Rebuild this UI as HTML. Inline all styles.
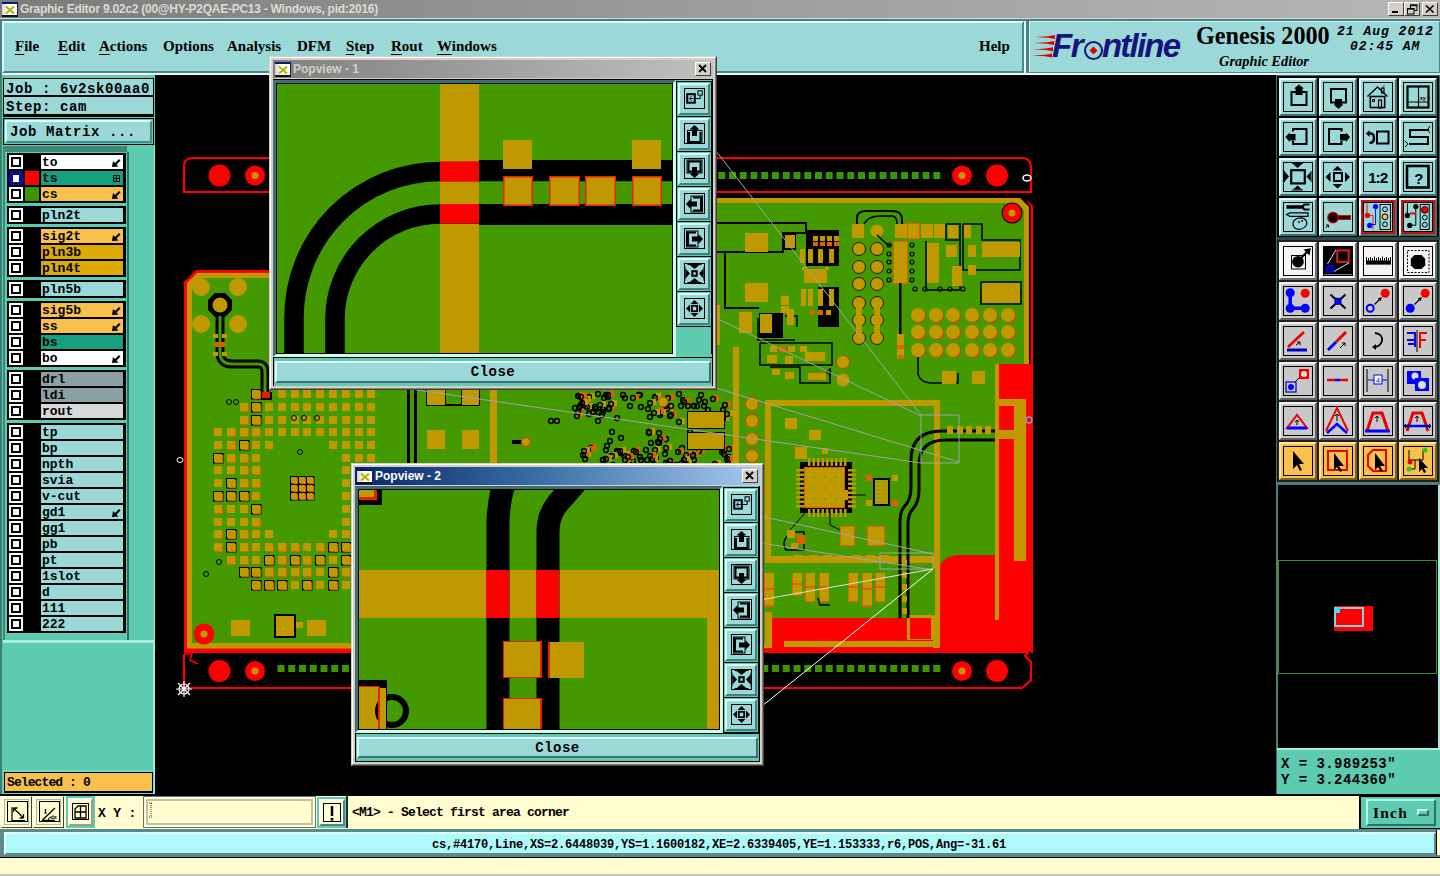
<!DOCTYPE html>
<html><head><meta charset="utf-8"><style>*{box-sizing:border-box;margin:0;padding:0}
html,body{width:1440px;height:876px;overflow:hidden;background:#fffcd0;position:relative;font-family:"Liberation Sans",sans-serif}
.a{position:absolute}
.mono{font-family:"Liberation Mono",monospace;font-weight:bold;color:#000}
.serif{font-family:"Liberation Serif",serif;font-weight:bold}
.mi{position:absolute;font-family:"Liberation Serif",serif;font-weight:bold;font-size:15px;color:#000;white-space:nowrap;line-height:16px}
.mi u{text-decoration:underline;text-underline-offset:3px;text-decoration-thickness:1px}
svg{display:block}
</style></head><body>
<div class="a" style="left:0;top:0;width:1440px;height:18px;background:linear-gradient(90deg,#7b7b7b 0%,#9a9a9a 45%,#b6b6b6 100%)"></div>
<div class="a" style="left:2px;top:2px;width:16px;height:15px;background:linear-gradient(90deg,#d8d8d8,#fff 40%);border-bottom:2px solid #111;border-right:1px solid #222"></div>
<div class="a" style="left:2px;top:2px;width:16px;height:2px;background:#0a1a70;"></div>
<svg class="a" style="left:4px;top:5px" width="12" height="10"><path d="M2 1.5 L10 8.5 M10 1.5 L2 8.5" stroke="#b0b800" stroke-width="2.2"/></svg>
<div class="a " style="left:20px;top:2px;font-size:12px;font-weight:bold;color:#dedad2;white-space:nowrap;letter-spacing:-0.25px">Graphic Editor 9.02c2 (00@HY-P2QAE-PC13 - Windows, pid:2016)</div>
<div class="a" style="left:1388px;top:2px;width:16px;height:14px;background:#d4d0c8;border-style:solid;border-width:1px;border-color:#fff #404040 #404040 #fff;"></div>
<div class="a" style="left:1404px;top:2px;width:16px;height:14px;background:#d4d0c8;border-style:solid;border-width:1px;border-color:#fff #404040 #404040 #fff;"></div>
<div class="a" style="left:1422px;top:2px;width:16px;height:14px;background:#d4d0c8;border-style:solid;border-width:1px;border-color:#fff #404040 #404040 #fff;"></div>
<svg class="a" style="left:1388px;top:2px" width="50" height="14"><rect x="4" y="9" width="6" height="2" fill="#000"/><path d="M22.5 6 V3.2 H29 V8.5 H26.5" fill="none" stroke="#000" stroke-width="1"/><rect x="22" y="2.5" width="7.5" height="1.6" fill="#000"/><rect x="19.5" y="6.5" width="6.5" height="5.5" fill="none" stroke="#000" stroke-width="1"/><rect x="19" y="6" width="7.5" height="1.6" fill="#000"/><path d="M38 3.5 L45.5 10.5 M45.5 3.5 L38 10.5" stroke="#000" stroke-width="1.7"/></svg>
<div class="a" style="left:0px;top:18px;width:1440px;height:1px;background:#cfdcdc;"></div>
<div class="a" style="left:0px;top:19px;width:1026px;height:2px;background:#4f8080;"></div>
<div class="a" style="left:0px;top:19px;width:2px;height:54px;background:#4f8080;"></div>
<div class="a" style="left:2px;top:21px;width:1022px;height:52px;background:#9bd9d9;border-style:solid;border-width:2px;border-color:#d8ffff #4f8585 #4f8585 #d8ffff;"></div>
<div class="a" style="left:1024px;top:21px;width:2px;height:52px;background:#d8ffff;"></div>
<div class="a mi" style="left:15px;top:38px;"><u>F</u>ile</div>
<div class="a mi" style="left:58px;top:38px;"><u>E</u>dit</div>
<div class="a mi" style="left:99px;top:38px;"><u>A</u>ctions</div>
<div class="a mi" style="left:163px;top:38px;">Options</div>
<div class="a mi" style="left:227px;top:38px;">Analysis</div>
<div class="a mi" style="left:297px;top:38px;">DFM</div>
<div class="a mi" style="left:346px;top:38px;"><u>S</u>tep</div>
<div class="a mi" style="left:391px;top:38px;"><u>R</u>out</div>
<div class="a mi" style="left:437px;top:38px;"><u>W</u>indows</div>
<div class="a mi" style="left:979px;top:38px;">Help</div>
<div class="a" style="left:1026px;top:19px;width:414px;height:2px;background:#4f8080;"></div>
<div class="a" style="left:1026px;top:19px;width:3px;height:54px;background:#4f8080;"></div>
<div class="a" style="left:1029px;top:21px;width:411px;height:52px;background:#9bd9d9;border-style:solid;border-width:1px;border-color:#c8f4f4 #4f8585 #4f8585 #c8f4f4;"></div>
<svg class="a" style="left:1030px;top:28px" width="165" height="36"><g fill="#e00000"><path d="M5 9 L18 8.2 L25 7 V11 L18 9.8 Z"/><path d="M4 15 L17 14.2 L24 13 V17 L17 15.8 Z"/><path d="M3 21.3 L16 20.5 L23 19.3 V23.3 L16 22.1 Z"/><path d="M2 27.5 L15 26.7 L22 25.5 V29.5 L15 28.3 Z"/></g></svg>
<div class="a " style="left:1052px;top:27px;font-family:'Liberation Sans',sans-serif;font-weight:bold;font-style:italic;font-size:33px;color:#14147a;letter-spacing:-1.5px;white-space:nowrap">Fr</div>
<div class="a " style="left:1102px;top:27px;font-family:'Liberation Sans',sans-serif;font-weight:bold;font-style:italic;font-size:33px;color:#14147a;letter-spacing:-1.8px;white-space:nowrap">ntline</div>
<svg class="a" style="left:1083px;top:40px" width="22" height="22"><circle cx="10.5" cy="10.5" r="8.5" fill="none" stroke="#14147a" stroke-width="2"/><path d="M10.5 6.5 L14.5 10.5 L10.5 14.5 L6.5 10.5 Z" fill="#e00000"/></svg>
<div class="a " style="left:1196px;top:22px;font-family:'Liberation Serif',serif;font-weight:bold;font-size:24.2px;color:#000;white-space:nowrap;letter-spacing:0px">Genesis 2000</div>
<div class="a " style="left:1337px;top:24px;font-family:'Liberation Mono',monospace;font-style:italic;font-weight:bold;font-size:13px;color:#000;white-space:nowrap;letter-spacing:1px">21 Aug 2012</div>
<div class="a " style="left:1350px;top:39px;font-family:'Liberation Mono',monospace;font-style:italic;font-weight:bold;font-size:13px;color:#000;white-space:nowrap;letter-spacing:1px">02:45 AM</div>
<div class="a " style="left:1219px;top:53px;font-family:'Liberation Serif',serif;font-style:italic;font-weight:bold;font-size:14.4px;color:#000;white-space:nowrap">Graphic Editor</div>
<div class="a" style="left:0px;top:73px;width:155px;height:723px;background:#5ccbb0;"></div>
<div class="a" style="left:0px;top:73px;width:155px;height:2px;background:#fff;"></div>
<div class="a" style="left:0px;top:73px;width:2px;height:723px;background:#3f7f70;"></div>
<div class="a" style="left:153px;top:73px;width:2px;height:723px;background:#a8ecdc;"></div>
<div class="a" style="left:2px;top:75px;width:153px;height:71px;background:#5ccbb0;"></div>
<div class="a" style="left:3px;top:78px;width:151px;height:39px;background:#000;"></div>
<div class="a" style="left:4px;top:79px;width:149px;height:16px;background:#9bd9d9;"></div>
<div class="a" style="left:4px;top:97px;width:149px;height:17px;background:#9bd9d9;"></div>
<div class="a mono" style="left:6px;top:81px;font-size:14px;white-space:nowrap;letter-spacing:0.6px">Job : 6v2sk00aa0</div>
<div class="a mono" style="left:6px;top:99px;font-size:14px;white-space:nowrap;letter-spacing:0.6px">Step: cam</div>
<div class="a" style="left:3px;top:118px;width:151px;height:27px;background:#000;"></div>
<div class="a" style="left:4px;top:119px;width:149px;height:25px;background:#5ccbb0;"></div>
<div class="a" style="left:5px;top:120px;width:147px;height:23px;background:#9bd9d9;border-style:solid;border-width:2px;border-color:#d8ffff #4f8585 #4f8585 #d8ffff;"></div>
<div class="a mono" style="left:10px;top:124px;font-size:14px;white-space:nowrap;letter-spacing:0.6px">Job Matrix ...</div>
<div class="a" style="left:3px;top:146px;width:151px;height:6px;background:#3f8777;"></div>
<div class="a" style="left:3px;top:146px;width:2px;height:496px;background:#3f8777;"></div>
<div class="a" style="left:5px;top:152px;width:122px;height:488px;background:#5ccbb0;"></div>
<div class="a" style="left:127px;top:146px;width:27px;height:496px;background:#5ccbb0;"></div>
<div class="a" style="left:127px;top:152px;width:2px;height:488px;background:#2f6f60;"></div>
<div class="a" style="left:3px;top:640px;width:151px;height:3px;background:#a8ecdc;"></div>
<div class="a" style="left:7px;top:153px;width:119px;height:50px;background:#000;"></div>
<div class="a" style="left:9px;top:155px;width:14px;height:14px;background:#ffffff;"></div>
<div class="a" style="left:11px;top:157px;width:10px;height:10px;background:#fff;border:2px solid #000;"></div>
<div class="a mono" style="left:41px;top:155px;width:82px;height:14px;background:#ffffff;font-size:13px;line-height:14px;overflow:hidden"><span style="position:absolute;left:1px;top:1px">to</span><svg width="10" height="10" style="position:absolute;right:2px;top:3px"><path d="M1 9 L2 3 L4 5 L8 1 L9.5 2.5 L5.5 6.5 L7.5 8.5 Z" fill="#000"/></svg></div>
<div class="a" style="left:9px;top:171px;width:14px;height:14px;background:#0a0a9a;"></div>
<div class="a" style="left:13px;top:175px;width:6px;height:7px;background:#fff;"></div>
<div class="a" style="left:25px;top:171px;width:14px;height:14px;background:#ff0000;"></div>
<div class="a mono" style="left:41px;top:171px;width:82px;height:14px;background:#17a07f;font-size:13px;line-height:14px;overflow:hidden"><span style="position:absolute;left:1px;top:1px">ts</span><svg width="7" height="7" style="position:absolute;right:3px;top:4px"><rect x="0.5" y="0.5" width="6" height="6" fill="none" stroke="#000"/><path d="M3.5 1 V6 M1 3.5 H6" stroke="#000"/></svg></div>
<div class="a" style="left:9px;top:187px;width:14px;height:14px;background:#ffffff;"></div>
<div class="a" style="left:11px;top:189px;width:10px;height:10px;background:#fff;border:2px solid #000;"></div>
<div class="a" style="left:25px;top:187px;width:14px;height:14px;background:#3c9600;"></div>
<div class="a mono" style="left:41px;top:187px;width:82px;height:14px;background:#f9c04c;font-size:13px;line-height:14px;overflow:hidden"><span style="position:absolute;left:1px;top:1px">cs</span><svg width="10" height="10" style="position:absolute;right:2px;top:3px"><path d="M1 9 L2 3 L4 5 L8 1 L9.5 2.5 L5.5 6.5 L7.5 8.5 Z" fill="#000"/></svg></div>
<div class="a" style="left:7px;top:206px;width:119px;height:18px;background:#000;"></div>
<div class="a" style="left:9px;top:208px;width:14px;height:14px;background:#ffffff;"></div>
<div class="a" style="left:11px;top:210px;width:10px;height:10px;background:#fff;border:2px solid #000;"></div>
<div class="a mono" style="left:41px;top:208px;width:82px;height:14px;background:#9bd9d9;font-size:13px;line-height:14px;overflow:hidden"><span style="position:absolute;left:1px;top:1px">pln2t</span></div>
<div class="a" style="left:7px;top:227px;width:119px;height:50px;background:#000;"></div>
<div class="a" style="left:9px;top:229px;width:14px;height:14px;background:#ffffff;"></div>
<div class="a" style="left:11px;top:231px;width:10px;height:10px;background:#fff;border:2px solid #000;"></div>
<div class="a mono" style="left:41px;top:229px;width:82px;height:14px;background:#f9c04c;font-size:13px;line-height:14px;overflow:hidden"><span style="position:absolute;left:1px;top:1px">sig2t</span><svg width="10" height="10" style="position:absolute;right:2px;top:3px"><path d="M1 9 L2 3 L4 5 L8 1 L9.5 2.5 L5.5 6.5 L7.5 8.5 Z" fill="#000"/></svg></div>
<div class="a" style="left:9px;top:245px;width:14px;height:14px;background:#ffffff;"></div>
<div class="a" style="left:11px;top:247px;width:10px;height:10px;background:#fff;border:2px solid #000;"></div>
<div class="a mono" style="left:41px;top:245px;width:82px;height:14px;background:#dcaa00;font-size:13px;line-height:14px;overflow:hidden"><span style="position:absolute;left:1px;top:1px">pln3b</span></div>
<div class="a" style="left:9px;top:261px;width:14px;height:14px;background:#ffffff;"></div>
<div class="a" style="left:11px;top:263px;width:10px;height:10px;background:#fff;border:2px solid #000;"></div>
<div class="a mono" style="left:41px;top:261px;width:82px;height:14px;background:#dcaa00;font-size:13px;line-height:14px;overflow:hidden"><span style="position:absolute;left:1px;top:1px">pln4t</span></div>
<div class="a" style="left:7px;top:280px;width:119px;height:18px;background:#000;"></div>
<div class="a" style="left:9px;top:282px;width:14px;height:14px;background:#ffffff;"></div>
<div class="a" style="left:11px;top:284px;width:10px;height:10px;background:#fff;border:2px solid #000;"></div>
<div class="a mono" style="left:41px;top:282px;width:82px;height:14px;background:#9bd9d9;font-size:13px;line-height:14px;overflow:hidden"><span style="position:absolute;left:1px;top:1px">pln5b</span></div>
<div class="a" style="left:7px;top:301px;width:119px;height:66px;background:#000;"></div>
<div class="a" style="left:9px;top:303px;width:14px;height:14px;background:#ffffff;"></div>
<div class="a" style="left:11px;top:305px;width:10px;height:10px;background:#fff;border:2px solid #000;"></div>
<div class="a mono" style="left:41px;top:303px;width:82px;height:14px;background:#f9c04c;font-size:13px;line-height:14px;overflow:hidden"><span style="position:absolute;left:1px;top:1px">sig5b</span><svg width="10" height="10" style="position:absolute;right:2px;top:3px"><path d="M1 9 L2 3 L4 5 L8 1 L9.5 2.5 L5.5 6.5 L7.5 8.5 Z" fill="#000"/></svg></div>
<div class="a" style="left:9px;top:319px;width:14px;height:14px;background:#ffffff;"></div>
<div class="a" style="left:11px;top:321px;width:10px;height:10px;background:#fff;border:2px solid #000;"></div>
<div class="a mono" style="left:41px;top:319px;width:82px;height:14px;background:#f9c04c;font-size:13px;line-height:14px;overflow:hidden"><span style="position:absolute;left:1px;top:1px">ss</span><svg width="10" height="10" style="position:absolute;right:2px;top:3px"><path d="M1 9 L2 3 L4 5 L8 1 L9.5 2.5 L5.5 6.5 L7.5 8.5 Z" fill="#000"/></svg></div>
<div class="a" style="left:9px;top:335px;width:14px;height:14px;background:#ffffff;"></div>
<div class="a" style="left:11px;top:337px;width:10px;height:10px;background:#fff;border:2px solid #000;"></div>
<div class="a mono" style="left:41px;top:335px;width:82px;height:14px;background:#17a07f;font-size:13px;line-height:14px;overflow:hidden"><span style="position:absolute;left:1px;top:1px">bs</span></div>
<div class="a" style="left:9px;top:351px;width:14px;height:14px;background:#ffffff;"></div>
<div class="a" style="left:11px;top:353px;width:10px;height:10px;background:#fff;border:2px solid #000;"></div>
<div class="a mono" style="left:41px;top:351px;width:82px;height:14px;background:#ffffff;font-size:13px;line-height:14px;overflow:hidden"><span style="position:absolute;left:1px;top:1px">bo</span><svg width="10" height="10" style="position:absolute;right:2px;top:3px"><path d="M1 9 L2 3 L4 5 L8 1 L9.5 2.5 L5.5 6.5 L7.5 8.5 Z" fill="#000"/></svg></div>
<div class="a" style="left:7px;top:370px;width:119px;height:50px;background:#000;"></div>
<div class="a" style="left:9px;top:372px;width:14px;height:14px;background:#ffffff;"></div>
<div class="a" style="left:11px;top:374px;width:10px;height:10px;background:#fff;border:2px solid #000;"></div>
<div class="a mono" style="left:41px;top:372px;width:82px;height:14px;background:#8aa0a4;font-size:13px;line-height:14px;overflow:hidden"><span style="position:absolute;left:1px;top:1px">drl</span></div>
<div class="a" style="left:9px;top:388px;width:14px;height:14px;background:#ffffff;"></div>
<div class="a" style="left:11px;top:390px;width:10px;height:10px;background:#fff;border:2px solid #000;"></div>
<div class="a mono" style="left:41px;top:388px;width:82px;height:14px;background:#8aa0a4;font-size:13px;line-height:14px;overflow:hidden"><span style="position:absolute;left:1px;top:1px">ldi</span></div>
<div class="a" style="left:9px;top:404px;width:14px;height:14px;background:#ffffff;"></div>
<div class="a" style="left:11px;top:406px;width:10px;height:10px;background:#fff;border:2px solid #000;"></div>
<div class="a mono" style="left:41px;top:404px;width:82px;height:14px;background:#d8d8d8;font-size:13px;line-height:14px;overflow:hidden"><span style="position:absolute;left:1px;top:1px">rout</span></div>
<div class="a" style="left:7px;top:423px;width:119px;height:210px;background:#000;"></div>
<div class="a" style="left:9px;top:425px;width:14px;height:14px;background:#ffffff;"></div>
<div class="a" style="left:11px;top:427px;width:10px;height:10px;background:#fff;border:2px solid #000;"></div>
<div class="a mono" style="left:41px;top:425px;width:82px;height:14px;background:#9bd9d9;font-size:13px;line-height:14px;overflow:hidden"><span style="position:absolute;left:1px;top:1px">tp</span></div>
<div class="a" style="left:9px;top:441px;width:14px;height:14px;background:#ffffff;"></div>
<div class="a" style="left:11px;top:443px;width:10px;height:10px;background:#fff;border:2px solid #000;"></div>
<div class="a mono" style="left:41px;top:441px;width:82px;height:14px;background:#9bd9d9;font-size:13px;line-height:14px;overflow:hidden"><span style="position:absolute;left:1px;top:1px">bp</span></div>
<div class="a" style="left:9px;top:457px;width:14px;height:14px;background:#ffffff;"></div>
<div class="a" style="left:11px;top:459px;width:10px;height:10px;background:#fff;border:2px solid #000;"></div>
<div class="a mono" style="left:41px;top:457px;width:82px;height:14px;background:#9bd9d9;font-size:13px;line-height:14px;overflow:hidden"><span style="position:absolute;left:1px;top:1px">npth</span></div>
<div class="a" style="left:9px;top:473px;width:14px;height:14px;background:#ffffff;"></div>
<div class="a" style="left:11px;top:475px;width:10px;height:10px;background:#fff;border:2px solid #000;"></div>
<div class="a mono" style="left:41px;top:473px;width:82px;height:14px;background:#9bd9d9;font-size:13px;line-height:14px;overflow:hidden"><span style="position:absolute;left:1px;top:1px">svia</span></div>
<div class="a" style="left:9px;top:489px;width:14px;height:14px;background:#ffffff;"></div>
<div class="a" style="left:11px;top:491px;width:10px;height:10px;background:#fff;border:2px solid #000;"></div>
<div class="a mono" style="left:41px;top:489px;width:82px;height:14px;background:#9bd9d9;font-size:13px;line-height:14px;overflow:hidden"><span style="position:absolute;left:1px;top:1px">v-cut</span></div>
<div class="a" style="left:9px;top:505px;width:14px;height:14px;background:#ffffff;"></div>
<div class="a" style="left:11px;top:507px;width:10px;height:10px;background:#fff;border:2px solid #000;"></div>
<div class="a mono" style="left:41px;top:505px;width:82px;height:14px;background:#9bd9d9;font-size:13px;line-height:14px;overflow:hidden"><span style="position:absolute;left:1px;top:1px">gd1</span><svg width="10" height="10" style="position:absolute;right:2px;top:3px"><path d="M1 9 L2 3 L4 5 L8 1 L9.5 2.5 L5.5 6.5 L7.5 8.5 Z" fill="#000"/></svg></div>
<div class="a" style="left:9px;top:521px;width:14px;height:14px;background:#ffffff;"></div>
<div class="a" style="left:11px;top:523px;width:10px;height:10px;background:#fff;border:2px solid #000;"></div>
<div class="a mono" style="left:41px;top:521px;width:82px;height:14px;background:#9bd9d9;font-size:13px;line-height:14px;overflow:hidden"><span style="position:absolute;left:1px;top:1px">gg1</span></div>
<div class="a" style="left:9px;top:537px;width:14px;height:14px;background:#ffffff;"></div>
<div class="a" style="left:11px;top:539px;width:10px;height:10px;background:#fff;border:2px solid #000;"></div>
<div class="a mono" style="left:41px;top:537px;width:82px;height:14px;background:#9bd9d9;font-size:13px;line-height:14px;overflow:hidden"><span style="position:absolute;left:1px;top:1px">pb</span></div>
<div class="a" style="left:9px;top:553px;width:14px;height:14px;background:#ffffff;"></div>
<div class="a" style="left:11px;top:555px;width:10px;height:10px;background:#fff;border:2px solid #000;"></div>
<div class="a mono" style="left:41px;top:553px;width:82px;height:14px;background:#9bd9d9;font-size:13px;line-height:14px;overflow:hidden"><span style="position:absolute;left:1px;top:1px">pt</span></div>
<div class="a" style="left:9px;top:569px;width:14px;height:14px;background:#ffffff;"></div>
<div class="a" style="left:11px;top:571px;width:10px;height:10px;background:#fff;border:2px solid #000;"></div>
<div class="a mono" style="left:41px;top:569px;width:82px;height:14px;background:#9bd9d9;font-size:13px;line-height:14px;overflow:hidden"><span style="position:absolute;left:1px;top:1px">1slot</span></div>
<div class="a" style="left:9px;top:585px;width:14px;height:14px;background:#ffffff;"></div>
<div class="a" style="left:11px;top:587px;width:10px;height:10px;background:#fff;border:2px solid #000;"></div>
<div class="a mono" style="left:41px;top:585px;width:82px;height:14px;background:#9bd9d9;font-size:13px;line-height:14px;overflow:hidden"><span style="position:absolute;left:1px;top:1px">d</span></div>
<div class="a" style="left:9px;top:601px;width:14px;height:14px;background:#ffffff;"></div>
<div class="a" style="left:11px;top:603px;width:10px;height:10px;background:#fff;border:2px solid #000;"></div>
<div class="a mono" style="left:41px;top:601px;width:82px;height:14px;background:#9bd9d9;font-size:13px;line-height:14px;overflow:hidden"><span style="position:absolute;left:1px;top:1px">111</span></div>
<div class="a" style="left:9px;top:617px;width:14px;height:14px;background:#ffffff;"></div>
<div class="a" style="left:11px;top:619px;width:10px;height:10px;background:#fff;border:2px solid #000;"></div>
<div class="a mono" style="left:41px;top:617px;width:82px;height:14px;background:#9bd9d9;font-size:13px;line-height:14px;overflow:hidden"><span style="position:absolute;left:1px;top:1px">222</span></div>
<div class="a" style="left:3px;top:770px;width:151px;height:25px;background:#6fd8c0;"></div>
<div class="a" style="left:4px;top:772px;width:149px;height:21px;background:#000;"></div>
<div class="a" style="left:5px;top:773px;width:147px;height:18px;background:#f9c04c;"></div>
<div class="a mono" style="left:7px;top:775px;font-size:13px;white-space:nowrap;letter-spacing:-0.9px">Selected : 0</div>
<svg class="a" style="left:155px;top:75px" width="1121" height="721" viewBox="155 75 1121 721">
<rect x="155" y="75" width="1121" height="721" fill="#000" />
<path d="M184 193 V166 Q184 158 193 158 H1022 Q1031 158 1031 168 V192 H184" fill="none" stroke="#f00" stroke-width="2.2"/>
<circle cx="219.5" cy="175.5" r="11" fill="#ff0000" />
<circle cx="255" cy="175.5" r="10" fill="#ff0000" />
<circle cx="255" cy="175.5" r="3.5" fill="#c09800" />
<rect x="277.5" y="172" width="7" height="7" fill="#3c9600" />
<rect x="288.25" y="172" width="7" height="7" fill="#3c9600" />
<rect x="299.0" y="172" width="7" height="7" fill="#3c9600" />
<rect x="309.75" y="172" width="7" height="7" fill="#3c9600" />
<rect x="320.5" y="172" width="7" height="7" fill="#3c9600" />
<rect x="331.25" y="172" width="7" height="7" fill="#3c9600" />
<rect x="342.0" y="172" width="7" height="7" fill="#3c9600" />
<rect x="352.75" y="172" width="7" height="7" fill="#3c9600" />
<rect x="363.5" y="172" width="7" height="7" fill="#3c9600" />
<rect x="374.25" y="172" width="7" height="7" fill="#3c9600" />
<rect x="385.0" y="172" width="7" height="7" fill="#3c9600" />
<rect x="395.75" y="172" width="7" height="7" fill="#3c9600" />
<rect x="406.5" y="172" width="7" height="7" fill="#3c9600" />
<rect x="417.25" y="172" width="7" height="7" fill="#3c9600" />
<rect x="428.0" y="172" width="7" height="7" fill="#3c9600" />
<rect x="438.75" y="172" width="7" height="7" fill="#3c9600" />
<rect x="449.5" y="172" width="7" height="7" fill="#3c9600" />
<rect x="460.25" y="172" width="7" height="7" fill="#3c9600" />
<rect x="471.0" y="172" width="7" height="7" fill="#3c9600" />
<rect x="481.75" y="172" width="7" height="7" fill="#3c9600" />
<rect x="492.5" y="172" width="7" height="7" fill="#3c9600" />
<rect x="503.25" y="172" width="7" height="7" fill="#3c9600" />
<rect x="514.0" y="172" width="7" height="7" fill="#3c9600" />
<rect x="524.75" y="172" width="7" height="7" fill="#3c9600" />
<rect x="535.5" y="172" width="7" height="7" fill="#3c9600" />
<rect x="546.25" y="172" width="7" height="7" fill="#3c9600" />
<rect x="557.0" y="172" width="7" height="7" fill="#3c9600" />
<rect x="567.75" y="172" width="7" height="7" fill="#3c9600" />
<rect x="578.5" y="172" width="7" height="7" fill="#3c9600" />
<rect x="589.25" y="172" width="7" height="7" fill="#3c9600" />
<rect x="600.0" y="172" width="7" height="7" fill="#3c9600" />
<rect x="610.75" y="172" width="7" height="7" fill="#3c9600" />
<rect x="621.5" y="172" width="7" height="7" fill="#3c9600" />
<rect x="632.25" y="172" width="7" height="7" fill="#3c9600" />
<rect x="643.0" y="172" width="7" height="7" fill="#3c9600" />
<rect x="653.75" y="172" width="7" height="7" fill="#3c9600" />
<rect x="664.5" y="172" width="7" height="7" fill="#3c9600" />
<rect x="675.25" y="172" width="7" height="7" fill="#3c9600" />
<rect x="686.0" y="172" width="7" height="7" fill="#3c9600" />
<rect x="696.75" y="172" width="7" height="7" fill="#3c9600" />
<rect x="707.5" y="172" width="7" height="7" fill="#3c9600" />
<rect x="718.25" y="172" width="7" height="7" fill="#3c9600" />
<rect x="729.0" y="172" width="7" height="7" fill="#3c9600" />
<rect x="739.75" y="172" width="7" height="7" fill="#3c9600" />
<rect x="750.5" y="172" width="7" height="7" fill="#3c9600" />
<rect x="761.25" y="172" width="7" height="7" fill="#3c9600" />
<rect x="772.0" y="172" width="7" height="7" fill="#3c9600" />
<rect x="782.75" y="172" width="7" height="7" fill="#3c9600" />
<rect x="793.5" y="172" width="7" height="7" fill="#3c9600" />
<rect x="804.25" y="172" width="7" height="7" fill="#3c9600" />
<rect x="815.0" y="172" width="7" height="7" fill="#3c9600" />
<rect x="825.75" y="172" width="7" height="7" fill="#3c9600" />
<rect x="836.5" y="172" width="7" height="7" fill="#3c9600" />
<rect x="847.25" y="172" width="7" height="7" fill="#3c9600" />
<rect x="858.0" y="172" width="7" height="7" fill="#3c9600" />
<rect x="868.75" y="172" width="7" height="7" fill="#3c9600" />
<rect x="879.5" y="172" width="7" height="7" fill="#3c9600" />
<rect x="890.25" y="172" width="7" height="7" fill="#3c9600" />
<rect x="901.0" y="172" width="7" height="7" fill="#3c9600" />
<rect x="911.75" y="172" width="7" height="7" fill="#3c9600" />
<rect x="922.5" y="172" width="7" height="7" fill="#3c9600" />
<rect x="933.25" y="172" width="7" height="7" fill="#3c9600" />
<circle cx="962" cy="175.5" r="10" fill="#ff0000" />
<circle cx="962" cy="175.5" r="3.5" fill="#c09800" />
<circle cx="997" cy="175.5" r="11" fill="#ff0000" />
<path d="M184 654 V688 H1022 L1031 680 V662 L1025 656 L1031 650" fill="none" stroke="#f00" stroke-width="2.2"/>
<path d="M184 654 H192 L190 660 L198 664" fill="none" stroke="#f00" stroke-width="1.5"/>
<circle cx="219.5" cy="671" r="11" fill="#ff0000" />
<circle cx="255" cy="671" r="10" fill="#ff0000" />
<circle cx="255" cy="671" r="3.5" fill="#c09800" />
<rect x="277.5" y="665" width="7" height="7" fill="#3c9600" />
<rect x="288.25" y="665" width="7" height="7" fill="#3c9600" />
<rect x="299.0" y="665" width="7" height="7" fill="#3c9600" />
<rect x="309.75" y="665" width="7" height="7" fill="#3c9600" />
<rect x="320.5" y="665" width="7" height="7" fill="#3c9600" />
<rect x="331.25" y="665" width="7" height="7" fill="#3c9600" />
<rect x="342.0" y="665" width="7" height="7" fill="#3c9600" />
<rect x="352.75" y="665" width="7" height="7" fill="#3c9600" />
<rect x="363.5" y="665" width="7" height="7" fill="#3c9600" />
<rect x="374.25" y="665" width="7" height="7" fill="#3c9600" />
<rect x="385.0" y="665" width="7" height="7" fill="#3c9600" />
<rect x="395.75" y="665" width="7" height="7" fill="#3c9600" />
<rect x="406.5" y="665" width="7" height="7" fill="#3c9600" />
<rect x="417.25" y="665" width="7" height="7" fill="#3c9600" />
<rect x="428.0" y="665" width="7" height="7" fill="#3c9600" />
<rect x="438.75" y="665" width="7" height="7" fill="#3c9600" />
<rect x="449.5" y="665" width="7" height="7" fill="#3c9600" />
<rect x="460.25" y="665" width="7" height="7" fill="#3c9600" />
<rect x="471.0" y="665" width="7" height="7" fill="#3c9600" />
<rect x="481.75" y="665" width="7" height="7" fill="#3c9600" />
<rect x="492.5" y="665" width="7" height="7" fill="#3c9600" />
<rect x="503.25" y="665" width="7" height="7" fill="#3c9600" />
<rect x="514.0" y="665" width="7" height="7" fill="#3c9600" />
<rect x="524.75" y="665" width="7" height="7" fill="#3c9600" />
<rect x="535.5" y="665" width="7" height="7" fill="#3c9600" />
<rect x="546.25" y="665" width="7" height="7" fill="#3c9600" />
<rect x="557.0" y="665" width="7" height="7" fill="#3c9600" />
<rect x="567.75" y="665" width="7" height="7" fill="#3c9600" />
<rect x="578.5" y="665" width="7" height="7" fill="#3c9600" />
<rect x="589.25" y="665" width="7" height="7" fill="#3c9600" />
<rect x="600.0" y="665" width="7" height="7" fill="#3c9600" />
<rect x="610.75" y="665" width="7" height="7" fill="#3c9600" />
<rect x="621.5" y="665" width="7" height="7" fill="#3c9600" />
<rect x="632.25" y="665" width="7" height="7" fill="#3c9600" />
<rect x="643.0" y="665" width="7" height="7" fill="#3c9600" />
<rect x="653.75" y="665" width="7" height="7" fill="#3c9600" />
<rect x="664.5" y="665" width="7" height="7" fill="#3c9600" />
<rect x="675.25" y="665" width="7" height="7" fill="#3c9600" />
<rect x="686.0" y="665" width="7" height="7" fill="#3c9600" />
<rect x="696.75" y="665" width="7" height="7" fill="#3c9600" />
<rect x="707.5" y="665" width="7" height="7" fill="#3c9600" />
<rect x="718.25" y="665" width="7" height="7" fill="#3c9600" />
<rect x="729.0" y="665" width="7" height="7" fill="#3c9600" />
<rect x="739.75" y="665" width="7" height="7" fill="#3c9600" />
<rect x="750.5" y="665" width="7" height="7" fill="#3c9600" />
<rect x="761.25" y="665" width="7" height="7" fill="#3c9600" />
<rect x="772.0" y="665" width="7" height="7" fill="#3c9600" />
<rect x="782.75" y="665" width="7" height="7" fill="#3c9600" />
<rect x="793.5" y="665" width="7" height="7" fill="#3c9600" />
<rect x="804.25" y="665" width="7" height="7" fill="#3c9600" />
<rect x="815.0" y="665" width="7" height="7" fill="#3c9600" />
<rect x="825.75" y="665" width="7" height="7" fill="#3c9600" />
<rect x="836.5" y="665" width="7" height="7" fill="#3c9600" />
<rect x="847.25" y="665" width="7" height="7" fill="#3c9600" />
<rect x="858.0" y="665" width="7" height="7" fill="#3c9600" />
<rect x="868.75" y="665" width="7" height="7" fill="#3c9600" />
<rect x="879.5" y="665" width="7" height="7" fill="#3c9600" />
<rect x="890.25" y="665" width="7" height="7" fill="#3c9600" />
<rect x="901.0" y="665" width="7" height="7" fill="#3c9600" />
<rect x="911.75" y="665" width="7" height="7" fill="#3c9600" />
<rect x="922.5" y="665" width="7" height="7" fill="#3c9600" />
<rect x="933.25" y="665" width="7" height="7" fill="#3c9600" />
<circle cx="962" cy="671" r="10" fill="#ff0000" />
<circle cx="962" cy="671" r="3.5" fill="#c09800" />
<circle cx="997" cy="671" r="11" fill="#ff0000" />
<path d="M184 653 V282 L196 270 H600 V196 H1023 L1033 206 V653 Z" fill="#f00"/>
<path d="M600 193 H1022 L1030.5 206.5 V653 H1029 V207 L1020 198 H600 Z" fill="#000"/>
<path d="M187 649 V283 L197 273 H600 V198 H1020 L1029 207 V649 Z" fill="#c09800"/>
<path d="M192 643 V286 L200 278 H600 V203 H1017 L1024 210 V643 Z" fill="#449900"/>
<path d="M184 650 H1032" stroke="#f00" stroke-width="3"/>
<rect x="184" y="194" width="850" height="2" fill="#000" />
<circle cx="201" cy="287" r="9" fill="#c09800" />
<circle cx="238" cy="287" r="9" fill="#c09800" />
<circle cx="201" cy="324" r="9" fill="#c09800" />
<circle cx="238" cy="324" r="9" fill="#c09800" />
<polygon points="232.0,310.0 225.0,317.0 215.0,317.0 208.0,310.0 208.0,300.0 215.0,293.0 225.0,293.0 232.0,300.0" fill="#000"/>
<circle cx="220" cy="305" r="7.5" fill="#c09800" />
<path d="M220 316 V352 Q220 364 232 364 H258 Q265 364 265 372 V396" fill="none" stroke="#000" stroke-width="9"/>
<path d="M220 316 V352 Q220 364 232 364 H258 Q265 364 265 372 V396" fill="none" stroke="#449900" stroke-width="3"/>
<rect x="213" y="334" width="5" height="4" fill="#c09800" />
<rect x="222" y="334" width="5" height="4" fill="#c09800" />
<rect x="215" y="342" width="10" height="5" fill="#e06000" />
<rect x="213" y="352" width="5" height="4" fill="#c09800" />
<rect x="222" y="352" width="5" height="4" fill="#c09800" />
<rect x="260" y="392" width="12" height="8" fill="#000" />
<rect x="262" y="392" width="8" height="6" fill="#e02000" />
<rect x="251" y="389" width="10.5" height="10.5" fill="#000" /><rect x="253" y="391" width="8" height="8" fill="#e06000" /><rect x="252" y="390" width="8" height="8" fill="#c09800" />
<rect x="278" y="390" width="8" height="8" fill="#c09800" />
<rect x="291" y="390" width="8" height="8" fill="#c09800" />
<rect x="303" y="390" width="8" height="8" fill="#c09800" />
<rect x="316" y="390" width="8" height="8" fill="#c09800" />
<rect x="329" y="390" width="8" height="8" fill="#c09800" />
<rect x="342" y="390" width="8" height="8" fill="#c09800" />
<rect x="355" y="390" width="8" height="8" fill="#c09800" />
<rect x="367" y="390" width="8" height="8" fill="#c09800" />
<rect x="241" y="404" width="8" height="8" fill="#e06000" /><rect x="240" y="403" width="8" height="8" fill="#c09800" />
<rect x="251" y="402" width="10.5" height="10.5" fill="#000" /><rect x="253" y="404" width="8" height="8" fill="#e06000" /><rect x="252" y="403" width="8" height="8" fill="#c09800" />
<rect x="265" y="403" width="8" height="8" fill="#c09800" />
<rect x="278" y="403" width="8" height="8" fill="#c09800" />
<rect x="291" y="403" width="8" height="8" fill="#c09800" />
<rect x="303" y="403" width="8" height="8" fill="#c09800" />
<rect x="316" y="403" width="8" height="8" fill="#c09800" />
<rect x="329" y="403" width="8" height="8" fill="#c09800" />
<rect x="342" y="403" width="8" height="8" fill="#c09800" />
<rect x="355" y="403" width="8" height="8" fill="#c09800" />
<rect x="367" y="403" width="8" height="8" fill="#c09800" />
<rect x="241" y="417" width="8" height="8" fill="#e06000" /><rect x="240" y="416" width="8" height="8" fill="#c09800" />
<rect x="251" y="415" width="10.5" height="10.5" fill="#000" /><rect x="253" y="417" width="8" height="8" fill="#e06000" /><rect x="252" y="416" width="8" height="8" fill="#c09800" />
<rect x="265" y="416" width="8" height="8" fill="#c09800" />
<rect x="278" y="416" width="8" height="8" fill="#c09800" />
<rect x="291" y="416" width="8" height="8" fill="#c09800" />
<rect x="303" y="416" width="8" height="8" fill="#c09800" />
<rect x="316" y="416" width="8" height="8" fill="#c09800" />
<rect x="329" y="416" width="8" height="8" fill="#c09800" />
<rect x="342" y="416" width="8" height="8" fill="#c09800" />
<rect x="355" y="416" width="8" height="8" fill="#c09800" />
<rect x="367" y="416" width="8" height="8" fill="#c09800" />
<rect x="214" y="428" width="8" height="8" fill="#c09800" />
<rect x="228" y="429" width="8" height="8" fill="#e06000" /><rect x="227" y="428" width="8" height="8" fill="#c09800" />
<rect x="241" y="429" width="8" height="8" fill="#e06000" /><rect x="240" y="428" width="8" height="8" fill="#c09800" />
<rect x="253" y="429" width="8" height="8" fill="#e06000" /><rect x="252" y="428" width="8" height="8" fill="#c09800" />
<rect x="265" y="428" width="8" height="8" fill="#c09800" />
<rect x="278" y="428" width="8" height="8" fill="#c09800" />
<rect x="291" y="428" width="8" height="8" fill="#c09800" />
<rect x="303" y="428" width="8" height="8" fill="#c09800" />
<rect x="316" y="428" width="8" height="8" fill="#c09800" />
<rect x="329" y="428" width="8" height="8" fill="#c09800" />
<rect x="342" y="428" width="8" height="8" fill="#c09800" />
<rect x="355" y="428" width="8" height="8" fill="#c09800" />
<rect x="367" y="428" width="8" height="8" fill="#c09800" />
<rect x="214" y="441" width="8" height="8" fill="#c09800" />
<rect x="228" y="442" width="8" height="8" fill="#e06000" /><rect x="227" y="441" width="8" height="8" fill="#c09800" />
<rect x="239" y="440" width="10.5" height="10.5" fill="#000" /><rect x="241" y="442" width="8" height="8" fill="#e06000" /><rect x="240" y="441" width="8" height="8" fill="#c09800" />
<rect x="252" y="441" width="8" height="8" fill="#c09800" />
<rect x="265" y="441" width="8" height="8" fill="#c09800" />
<rect x="329" y="441" width="8" height="8" fill="#c09800" />
<rect x="342" y="441" width="8" height="8" fill="#c09800" />
<rect x="355" y="441" width="8" height="8" fill="#c09800" />
<rect x="367" y="441" width="8" height="8" fill="#c09800" />
<rect x="213" y="453" width="10.5" height="10.5" fill="#000" /><rect x="215" y="455" width="8" height="8" fill="#e06000" /><rect x="214" y="454" width="8" height="8" fill="#c09800" />
<rect x="228" y="455" width="8" height="8" fill="#e06000" /><rect x="227" y="454" width="8" height="8" fill="#c09800" />
<rect x="241" y="455" width="8" height="8" fill="#e06000" /><rect x="240" y="454" width="8" height="8" fill="#c09800" />
<rect x="252" y="454" width="8" height="8" fill="#c09800" />
<rect x="342" y="454" width="8" height="8" fill="#c09800" />
<rect x="355" y="454" width="8" height="8" fill="#c09800" />
<rect x="367" y="454" width="8" height="8" fill="#c09800" />
<rect x="214" y="466" width="8" height="8" fill="#c09800" />
<rect x="227" y="466" width="8" height="8" fill="#c09800" />
<rect x="241" y="467" width="8" height="8" fill="#e06000" /><rect x="240" y="466" width="8" height="8" fill="#c09800" />
<rect x="253" y="467" width="8" height="8" fill="#e06000" /><rect x="252" y="466" width="8" height="8" fill="#c09800" />
<rect x="342" y="466" width="8" height="8" fill="#c09800" />
<rect x="355" y="466" width="8" height="8" fill="#c09800" />
<rect x="367" y="466" width="8" height="8" fill="#c09800" />
<rect x="214" y="479" width="8" height="8" fill="#c09800" />
<rect x="226" y="478" width="10.5" height="10.5" fill="#000" /><rect x="228" y="480" width="8" height="8" fill="#e06000" /><rect x="227" y="479" width="8" height="8" fill="#c09800" />
<rect x="241" y="480" width="8" height="8" fill="#e06000" /><rect x="240" y="479" width="8" height="8" fill="#c09800" />
<rect x="253" y="480" width="8" height="8" fill="#e06000" /><rect x="252" y="479" width="8" height="8" fill="#c09800" />
<rect x="342" y="479" width="8" height="8" fill="#c09800" />
<rect x="355" y="479" width="8" height="8" fill="#c09800" />
<rect x="367" y="479" width="8" height="8" fill="#c09800" />
<rect x="213" y="491" width="10.5" height="10.5" fill="#000" /><rect x="215" y="493" width="8" height="8" fill="#e06000" /><rect x="214" y="492" width="8" height="8" fill="#c09800" />
<rect x="226" y="491" width="10.5" height="10.5" fill="#000" /><rect x="228" y="493" width="8" height="8" fill="#e06000" /><rect x="227" y="492" width="8" height="8" fill="#c09800" />
<rect x="239" y="491" width="10.5" height="10.5" fill="#000" /><rect x="241" y="493" width="8" height="8" fill="#e06000" /><rect x="240" y="492" width="8" height="8" fill="#c09800" />
<rect x="252" y="492" width="8" height="8" fill="#c09800" />
<rect x="342" y="492" width="8" height="8" fill="#c09800" />
<rect x="355" y="492" width="8" height="8" fill="#c09800" />
<rect x="367" y="492" width="8" height="8" fill="#c09800" />
<rect x="215" y="506" width="8" height="8" fill="#e06000" /><rect x="214" y="505" width="8" height="8" fill="#c09800" />
<rect x="227" y="505" width="8" height="8" fill="#c09800" />
<rect x="240" y="505" width="8" height="8" fill="#c09800" />
<rect x="251" y="504" width="10.5" height="10.5" fill="#000" /><rect x="253" y="506" width="8" height="8" fill="#e06000" /><rect x="252" y="505" width="8" height="8" fill="#c09800" />
<rect x="342" y="505" width="8" height="8" fill="#c09800" />
<rect x="355" y="505" width="8" height="8" fill="#c09800" />
<rect x="367" y="505" width="8" height="8" fill="#c09800" />
<rect x="214" y="518" width="8" height="8" fill="#c09800" />
<rect x="227" y="518" width="8" height="8" fill="#c09800" />
<rect x="240" y="518" width="8" height="8" fill="#c09800" />
<rect x="253" y="519" width="8" height="8" fill="#e06000" /><rect x="252" y="518" width="8" height="8" fill="#c09800" />
<rect x="342" y="518" width="8" height="8" fill="#c09800" />
<rect x="355" y="518" width="8" height="8" fill="#c09800" />
<rect x="367" y="518" width="8" height="8" fill="#c09800" />
<rect x="215" y="531" width="8" height="8" fill="#e06000" /><rect x="214" y="530" width="8" height="8" fill="#c09800" />
<rect x="226" y="529" width="10.5" height="10.5" fill="#000" /><rect x="228" y="531" width="8" height="8" fill="#e06000" /><rect x="227" y="530" width="8" height="8" fill="#c09800" />
<rect x="241" y="531" width="8" height="8" fill="#e06000" /><rect x="240" y="530" width="8" height="8" fill="#c09800" />
<rect x="252" y="530" width="8" height="8" fill="#c09800" />
<rect x="265" y="530" width="8" height="8" fill="#c09800" />
<rect x="329" y="530" width="8" height="8" fill="#c09800" />
<rect x="342" y="530" width="8" height="8" fill="#c09800" />
<rect x="355" y="530" width="8" height="8" fill="#c09800" />
<rect x="367" y="530" width="8" height="8" fill="#c09800" />
<rect x="215" y="544" width="8" height="8" fill="#e06000" /><rect x="214" y="543" width="8" height="8" fill="#c09800" />
<rect x="226" y="542" width="10.5" height="10.5" fill="#000" /><rect x="228" y="544" width="8" height="8" fill="#e06000" /><rect x="227" y="543" width="8" height="8" fill="#c09800" />
<rect x="241" y="544" width="8" height="8" fill="#e06000" /><rect x="240" y="543" width="8" height="8" fill="#c09800" />
<rect x="252" y="543" width="8" height="8" fill="#c09800" />
<rect x="266" y="544" width="8" height="8" fill="#e06000" /><rect x="265" y="543" width="8" height="8" fill="#c09800" />
<rect x="279" y="544" width="8" height="8" fill="#e06000" /><rect x="278" y="543" width="8" height="8" fill="#c09800" />
<rect x="292" y="544" width="8" height="8" fill="#e06000" /><rect x="291" y="543" width="8" height="8" fill="#c09800" />
<rect x="303" y="543" width="8" height="8" fill="#c09800" />
<rect x="317" y="544" width="8" height="8" fill="#e06000" /><rect x="316" y="543" width="8" height="8" fill="#c09800" />
<rect x="328" y="542" width="10.5" height="10.5" fill="#000" /><rect x="330" y="544" width="8" height="8" fill="#e06000" /><rect x="329" y="543" width="8" height="8" fill="#c09800" />
<rect x="341" y="542" width="10.5" height="10.5" fill="#000" /><rect x="343" y="544" width="8" height="8" fill="#e06000" /><rect x="342" y="543" width="8" height="8" fill="#c09800" />
<rect x="354" y="542" width="10.5" height="10.5" fill="#000" /><rect x="356" y="544" width="8" height="8" fill="#e06000" /><rect x="355" y="543" width="8" height="8" fill="#c09800" />
<rect x="366" y="542" width="10.5" height="10.5" fill="#000" /><rect x="368" y="544" width="8" height="8" fill="#e06000" /><rect x="367" y="543" width="8" height="8" fill="#c09800" />
<rect x="228" y="557" width="8" height="8" fill="#e06000" /><rect x="227" y="556" width="8" height="8" fill="#c09800" />
<rect x="241" y="557" width="8" height="8" fill="#e06000" /><rect x="240" y="556" width="8" height="8" fill="#c09800" />
<rect x="252" y="556" width="8" height="8" fill="#c09800" />
<rect x="264" y="555" width="10.5" height="10.5" fill="#000" /><rect x="266" y="557" width="8" height="8" fill="#e06000" /><rect x="265" y="556" width="8" height="8" fill="#c09800" />
<rect x="279" y="557" width="8" height="8" fill="#e06000" /><rect x="278" y="556" width="8" height="8" fill="#c09800" />
<rect x="290" y="555" width="10.5" height="10.5" fill="#000" /><rect x="292" y="557" width="8" height="8" fill="#e06000" /><rect x="291" y="556" width="8" height="8" fill="#c09800" />
<rect x="304" y="557" width="8" height="8" fill="#e06000" /><rect x="303" y="556" width="8" height="8" fill="#c09800" />
<rect x="315" y="555" width="10.5" height="10.5" fill="#000" /><rect x="317" y="557" width="8" height="8" fill="#e06000" /><rect x="316" y="556" width="8" height="8" fill="#c09800" />
<rect x="329" y="556" width="8" height="8" fill="#c09800" />
<rect x="341" y="555" width="10.5" height="10.5" fill="#000" /><rect x="343" y="557" width="8" height="8" fill="#e06000" /><rect x="342" y="556" width="8" height="8" fill="#c09800" />
<rect x="355" y="556" width="8" height="8" fill="#c09800" />
<rect x="366" y="555" width="10.5" height="10.5" fill="#000" /><rect x="368" y="557" width="8" height="8" fill="#e06000" /><rect x="367" y="556" width="8" height="8" fill="#c09800" />
<rect x="239" y="567" width="10.5" height="10.5" fill="#000" /><rect x="241" y="569" width="8" height="8" fill="#e06000" /><rect x="240" y="568" width="8" height="8" fill="#c09800" />
<rect x="251" y="567" width="10.5" height="10.5" fill="#000" /><rect x="253" y="569" width="8" height="8" fill="#e06000" /><rect x="252" y="568" width="8" height="8" fill="#c09800" />
<rect x="266" y="569" width="8" height="8" fill="#e06000" /><rect x="265" y="568" width="8" height="8" fill="#c09800" />
<rect x="279" y="569" width="8" height="8" fill="#e06000" /><rect x="278" y="568" width="8" height="8" fill="#c09800" />
<rect x="292" y="569" width="8" height="8" fill="#e06000" /><rect x="291" y="568" width="8" height="8" fill="#c09800" />
<rect x="304" y="569" width="8" height="8" fill="#e06000" /><rect x="303" y="568" width="8" height="8" fill="#c09800" />
<rect x="316" y="568" width="8" height="8" fill="#c09800" />
<rect x="328" y="567" width="10.5" height="10.5" fill="#000" /><rect x="330" y="569" width="8" height="8" fill="#e06000" /><rect x="329" y="568" width="8" height="8" fill="#c09800" />
<rect x="343" y="569" width="8" height="8" fill="#e06000" /><rect x="342" y="568" width="8" height="8" fill="#c09800" />
<rect x="354" y="567" width="10.5" height="10.5" fill="#000" /><rect x="356" y="569" width="8" height="8" fill="#e06000" /><rect x="355" y="568" width="8" height="8" fill="#c09800" />
<rect x="366" y="567" width="10.5" height="10.5" fill="#000" /><rect x="368" y="569" width="8" height="8" fill="#e06000" /><rect x="367" y="568" width="8" height="8" fill="#c09800" />
<rect x="251" y="580" width="10.5" height="10.5" fill="#000" /><rect x="253" y="582" width="8" height="8" fill="#e06000" /><rect x="252" y="581" width="8" height="8" fill="#c09800" />
<rect x="264" y="580" width="10.5" height="10.5" fill="#000" /><rect x="266" y="582" width="8" height="8" fill="#e06000" /><rect x="265" y="581" width="8" height="8" fill="#c09800" />
<rect x="277" y="580" width="10.5" height="10.5" fill="#000" /><rect x="279" y="582" width="8" height="8" fill="#e06000" /><rect x="278" y="581" width="8" height="8" fill="#c09800" />
<rect x="291" y="581" width="8" height="8" fill="#c09800" />
<rect x="302" y="580" width="10.5" height="10.5" fill="#000" /><rect x="304" y="582" width="8" height="8" fill="#e06000" /><rect x="303" y="581" width="8" height="8" fill="#c09800" />
<rect x="316" y="581" width="8" height="8" fill="#c09800" />
<rect x="328" y="580" width="10.5" height="10.5" fill="#000" /><rect x="330" y="582" width="8" height="8" fill="#e06000" /><rect x="329" y="581" width="8" height="8" fill="#c09800" />
<rect x="342" y="581" width="8" height="8" fill="#c09800" />
<rect x="354" y="580" width="10.5" height="10.5" fill="#000" /><rect x="356" y="582" width="8" height="8" fill="#e06000" /><rect x="355" y="581" width="8" height="8" fill="#c09800" />
<rect x="368" y="582" width="8" height="8" fill="#e06000" /><rect x="367" y="581" width="8" height="8" fill="#c09800" />
<rect x="290" y="476" width="8.5" height="8.5" fill="#000" /><rect x="292" y="478" width="6" height="6" fill="#e06000" /><rect x="291" y="477" width="6" height="6" fill="#c09800" />
<rect x="290" y="484" width="8.5" height="8.5" fill="#000" /><rect x="292" y="486" width="6" height="6" fill="#e06000" /><rect x="291" y="485" width="6" height="6" fill="#c09800" />
<rect x="290" y="492" width="8.5" height="8.5" fill="#000" /><rect x="292" y="494" width="6" height="6" fill="#e06000" /><rect x="291" y="493" width="6" height="6" fill="#c09800" />
<rect x="298" y="476" width="8.5" height="8.5" fill="#000" /><rect x="300" y="478" width="6" height="6" fill="#e06000" /><rect x="299" y="477" width="6" height="6" fill="#c09800" />
<rect x="298" y="484" width="8.5" height="8.5" fill="#000" /><rect x="300" y="486" width="6" height="6" fill="#e06000" /><rect x="299" y="485" width="6" height="6" fill="#c09800" />
<rect x="298" y="492" width="8.5" height="8.5" fill="#000" /><rect x="300" y="494" width="6" height="6" fill="#e06000" /><rect x="299" y="493" width="6" height="6" fill="#c09800" />
<rect x="306" y="476" width="8.5" height="8.5" fill="#000" /><rect x="308" y="478" width="6" height="6" fill="#e06000" /><rect x="307" y="477" width="6" height="6" fill="#c09800" />
<rect x="306" y="484" width="8.5" height="8.5" fill="#000" /><rect x="308" y="486" width="6" height="6" fill="#e06000" /><rect x="307" y="485" width="6" height="6" fill="#c09800" />
<rect x="306" y="492" width="8.5" height="8.5" fill="#000" /><rect x="308" y="494" width="6" height="6" fill="#e06000" /><rect x="307" y="493" width="6" height="6" fill="#c09800" />
<circle cx="229" cy="402" r="2.5" fill="none" stroke="#000" stroke-width="1"/>
<circle cx="236" cy="402" r="2.5" fill="none" stroke="#000" stroke-width="1"/>
<circle cx="294" cy="418" r="2.5" fill="none" stroke="#000" stroke-width="1"/>
<circle cx="304" cy="418" r="2.5" fill="none" stroke="#000" stroke-width="1"/>
<circle cx="317" cy="418" r="2.5" fill="none" stroke="#000" stroke-width="1"/>
<circle cx="300" cy="452" r="2.5" fill="none" stroke="#000" stroke-width="1"/>
<circle cx="219" cy="562" r="2.5" fill="none" stroke="#000" stroke-width="1"/>
<circle cx="206" cy="574" r="2.5" fill="none" stroke="#000" stroke-width="1"/>
<rect x="231" y="620" width="19" height="16" fill="#c09800" />
<rect x="274" y="614" width="22" height="24" fill="#000" />
<rect x="276" y="616" width="18" height="20" fill="#c09800" />
<rect x="296" y="622" width="7" height="6" fill="#c09800" />
<rect x="307" y="620" width="19" height="16" fill="#c09800" />
<circle cx="204" cy="634" r="10.5" fill="#ff0000" />
<circle cx="204" cy="634" r="3.5" fill="#c09800" />
<ellipse cx="180" cy="460" rx="3" ry="2.5" fill="none" stroke="#fff" stroke-width="1"/>
<rect x="407" y="389" width="3" height="82" fill="#000" />
<rect x="414" y="389" width="3" height="82" fill="#000" />
<rect x="426" y="389" width="54" height="17" fill="#000" />
<rect x="427" y="389" width="18" height="16" fill="#c09800" />
<rect x="462" y="389" width="17" height="16" fill="#c09800" />
<rect x="446" y="389" width="15" height="15" fill="#449900" />
<rect x="427" y="430" width="18" height="19" fill="#c09800" />
<rect x="462" y="430" width="17" height="19" fill="#c09800" />
<rect x="490" y="389" width="7" height="77" fill="#c09800" />
<path d="M512 442 H524" stroke="#000" stroke-width="4"/>
<circle cx="526" cy="442" r="4.5" fill="#c09800" stroke="#d04000"/>
<circle cx="604" cy="398" r="2.4" fill="none" stroke="#000" stroke-width="1.5"/>
<rect x="580" y="404" width="5" height="6" fill="#e06000" />
<circle cx="579" cy="408" r="2.4" fill="none" stroke="#000" stroke-width="1.5"/>
<circle cx="623" cy="395" r="2.4" fill="none" stroke="#000" stroke-width="1.5"/>
<circle cx="579" cy="396" r="2.4" fill="none" stroke="#000" stroke-width="1.5"/>
<rect x="656" y="393" width="5" height="6" fill="#c09800" />
<circle cx="655" cy="397" r="2.4" fill="none" stroke="#000" stroke-width="1.5"/>
<rect x="668" y="405" width="5" height="6" fill="#c09800" />
<circle cx="667" cy="409" r="2.4" fill="none" stroke="#000" stroke-width="1.5"/>
<rect x="578" y="412" width="5" height="6" fill="#e06000" />
<circle cx="577" cy="416" r="2.4" fill="none" stroke="#000" stroke-width="1.5"/>
<circle cx="584" cy="402" r="2.4" fill="none" stroke="#000" stroke-width="1.5"/>
<circle cx="590" cy="409" r="2.4" fill="none" stroke="#000" stroke-width="1.5"/>
<rect x="610" y="404" width="5" height="6" fill="#e06000" />
<circle cx="609" cy="408" r="2.4" fill="none" stroke="#000" stroke-width="1.5"/>
<circle cx="593" cy="412" r="2.4" fill="none" stroke="#000" stroke-width="1.5"/>
<circle cx="603" cy="409" r="2.4" fill="none" stroke="#000" stroke-width="1.5"/>
<circle cx="602" cy="415" r="2.4" fill="none" stroke="#000" stroke-width="1.5"/>
<circle cx="596" cy="409" r="2.4" fill="none" stroke="#000" stroke-width="1.5"/>
<rect x="661" y="409" width="5" height="6" fill="#c09800" />
<circle cx="660" cy="413" r="2.4" fill="none" stroke="#000" stroke-width="1.5"/>
<circle cx="584" cy="405" r="2.4" fill="none" stroke="#000" stroke-width="1.5"/>
<rect x="588" y="403" width="5" height="6" fill="#c09800" />
<circle cx="587" cy="407" r="2.4" fill="none" stroke="#000" stroke-width="1.5"/>
<circle cx="648" cy="409" r="2.4" fill="none" stroke="#000" stroke-width="1.5"/>
<circle cx="603" cy="412" r="2.4" fill="none" stroke="#000" stroke-width="1.5"/>
<circle cx="630" cy="406" r="2.4" fill="none" stroke="#000" stroke-width="1.5"/>
<circle cx="666" cy="406" r="2.4" fill="none" stroke="#000" stroke-width="1.5"/>
<circle cx="578" cy="412" r="2.4" fill="none" stroke="#000" stroke-width="1.5"/>
<rect x="672" y="411" width="5" height="6" fill="#e06000" />
<circle cx="671" cy="415" r="2.4" fill="none" stroke="#000" stroke-width="1.5"/>
<circle cx="639" cy="395" r="2.4" fill="none" stroke="#000" stroke-width="1.5"/>
<rect x="590" y="393" width="5" height="6" fill="#c09800" />
<circle cx="589" cy="397" r="2.4" fill="none" stroke="#000" stroke-width="1.5"/>
<rect x="586" y="396" width="5" height="6" fill="#c09800" />
<circle cx="585" cy="400" r="2.4" fill="none" stroke="#000" stroke-width="1.5"/>
<circle cx="580" cy="406" r="2.4" fill="none" stroke="#000" stroke-width="1.5"/>
<circle cx="660" cy="415" r="2.4" fill="none" stroke="#000" stroke-width="1.5"/>
<rect x="601" y="401" width="5" height="6" fill="#c09800" />
<circle cx="600" cy="405" r="2.4" fill="none" stroke="#000" stroke-width="1.5"/>
<rect x="669" y="394" width="5" height="6" fill="#e06000" />
<circle cx="668" cy="398" r="2.4" fill="none" stroke="#000" stroke-width="1.5"/>
<circle cx="595" cy="407" r="2.4" fill="none" stroke="#000" stroke-width="1.5"/>
<circle cx="598" cy="394" r="2.4" fill="none" stroke="#000" stroke-width="1.5"/>
<circle cx="609" cy="409" r="2.4" fill="none" stroke="#000" stroke-width="1.5"/>
<circle cx="641" cy="407" r="2.4" fill="none" stroke="#000" stroke-width="1.5"/>
<circle cx="640" cy="395" r="2.4" fill="none" stroke="#000" stroke-width="1.5"/>
<circle cx="650" cy="417" r="2.4" fill="none" stroke="#000" stroke-width="1.5"/>
<rect x="612" y="400" width="5" height="6" fill="#c09800" />
<circle cx="611" cy="404" r="2.4" fill="none" stroke="#000" stroke-width="1.5"/>
<rect x="579" y="392" width="5" height="6" fill="#e06000" />
<circle cx="578" cy="396" r="2.4" fill="none" stroke="#000" stroke-width="1.5"/>
<rect x="607" y="391" width="5" height="6" fill="#e06000" />
<circle cx="606" cy="395" r="2.4" fill="none" stroke="#000" stroke-width="1.5"/>
<rect x="583" y="399" width="5" height="6" fill="#c09800" />
<circle cx="582" cy="403" r="2.4" fill="none" stroke="#000" stroke-width="1.5"/>
<rect x="634" y="394" width="5" height="6" fill="#e06000" />
<circle cx="633" cy="398" r="2.4" fill="none" stroke="#000" stroke-width="1.5"/>
<circle cx="608" cy="397" r="2.4" fill="none" stroke="#000" stroke-width="1.5"/>
<circle cx="671" cy="406" r="2.4" fill="none" stroke="#000" stroke-width="1.5"/>
<rect x="582" y="393" width="5" height="6" fill="#e06000" />
<circle cx="581" cy="397" r="2.4" fill="none" stroke="#000" stroke-width="1.5"/>
<rect x="656" y="394" width="5" height="6" fill="#c09800" />
<circle cx="655" cy="398" r="2.4" fill="none" stroke="#000" stroke-width="1.5"/>
<circle cx="625" cy="398" r="2.4" fill="none" stroke="#000" stroke-width="1.5"/>
<circle cx="575" cy="408" r="2.4" fill="none" stroke="#000" stroke-width="1.5"/>
<rect x="659" y="408" width="5" height="6" fill="#e06000" />
<circle cx="658" cy="412" r="2.4" fill="none" stroke="#000" stroke-width="1.5"/>
<circle cx="589" cy="414" r="2.4" fill="none" stroke="#000" stroke-width="1.5"/>
<rect x="651" y="399" width="5" height="6" fill="#c09800" />
<circle cx="650" cy="403" r="2.4" fill="none" stroke="#000" stroke-width="1.5"/>
<circle cx="670" cy="416" r="2.4" fill="none" stroke="#000" stroke-width="1.5"/>
<rect x="655" y="409" width="5" height="6" fill="#c09800" />
<circle cx="654" cy="413" r="2.4" fill="none" stroke="#000" stroke-width="1.5"/>
<rect x="609" y="391" width="5" height="6" fill="#e06000" />
<circle cx="608" cy="395" r="2.4" fill="none" stroke="#000" stroke-width="1.5"/>
<circle cx="598" cy="412" r="2.4" fill="none" stroke="#000" stroke-width="1.5"/>
<circle cx="617" cy="418" r="2.4" fill="none" stroke="#000" stroke-width="1.5"/>
<rect x="726" y="401" width="5" height="6" fill="#e06000" />
<circle cx="725" cy="405" r="2.4" fill="none" stroke="#000" stroke-width="1.5"/>
<circle cx="683" cy="400" r="2.4" fill="none" stroke="#000" stroke-width="1.5"/>
<circle cx="722" cy="420" r="2.4" fill="none" stroke="#000" stroke-width="1.5"/>
<rect x="710" y="415" width="5" height="6" fill="#c09800" />
<circle cx="709" cy="419" r="2.4" fill="none" stroke="#000" stroke-width="1.5"/>
<circle cx="723" cy="418" r="2.4" fill="none" stroke="#000" stroke-width="1.5"/>
<circle cx="699" cy="400" r="2.4" fill="none" stroke="#000" stroke-width="1.5"/>
<circle cx="691" cy="419" r="2.4" fill="none" stroke="#000" stroke-width="1.5"/>
<circle cx="694" cy="406" r="2.4" fill="none" stroke="#000" stroke-width="1.5"/>
<rect x="714" y="395" width="5" height="6" fill="#e06000" />
<circle cx="713" cy="399" r="2.4" fill="none" stroke="#000" stroke-width="1.5"/>
<rect x="724" y="415" width="5" height="6" fill="#c09800" />
<circle cx="723" cy="419" r="2.4" fill="none" stroke="#000" stroke-width="1.5"/>
<rect x="728" y="410" width="5" height="6" fill="#c09800" />
<circle cx="727" cy="414" r="2.4" fill="none" stroke="#000" stroke-width="1.5"/>
<circle cx="679" cy="394" r="2.4" fill="none" stroke="#000" stroke-width="1.5"/>
<circle cx="708" cy="410" r="2.4" fill="none" stroke="#000" stroke-width="1.5"/>
<circle cx="696" cy="421" r="2.4" fill="none" stroke="#000" stroke-width="1.5"/>
<rect x="685" y="398" width="5" height="6" fill="#e06000" />
<circle cx="684" cy="402" r="2.4" fill="none" stroke="#000" stroke-width="1.5"/>
<circle cx="705" cy="402" r="2.4" fill="none" stroke="#000" stroke-width="1.5"/>
<rect x="680" y="418" width="5" height="6" fill="#c09800" />
<circle cx="679" cy="422" r="2.4" fill="none" stroke="#000" stroke-width="1.5"/>
<circle cx="705" cy="422" r="2.4" fill="none" stroke="#000" stroke-width="1.5"/>
<circle cx="723" cy="410" r="2.4" fill="none" stroke="#000" stroke-width="1.5"/>
<circle cx="701" cy="395" r="2.4" fill="none" stroke="#000" stroke-width="1.5"/>
<circle cx="612" cy="432" r="2.4" fill="none" stroke="#000" stroke-width="1.5"/>
<circle cx="610" cy="441" r="2.4" fill="none" stroke="#000" stroke-width="1.5"/>
<circle cx="666" cy="439" r="2.4" fill="none" stroke="#000" stroke-width="1.5"/>
<rect x="667" y="444" width="5" height="6" fill="#c09800" />
<circle cx="666" cy="448" r="2.4" fill="none" stroke="#000" stroke-width="1.5"/>
<circle cx="621" cy="438" r="2.4" fill="none" stroke="#000" stroke-width="1.5"/>
<circle cx="659" cy="443" r="2.4" fill="none" stroke="#000" stroke-width="1.5"/>
<circle cx="717" cy="441" r="2.4" fill="none" stroke="#000" stroke-width="1.5"/>
<circle cx="658" cy="442" r="2.4" fill="none" stroke="#000" stroke-width="1.5"/>
<circle cx="651" cy="443" r="2.4" fill="none" stroke="#000" stroke-width="1.5"/>
<circle cx="722" cy="446" r="2.4" fill="none" stroke="#000" stroke-width="1.5"/>
<circle cx="722" cy="437" r="2.4" fill="none" stroke="#000" stroke-width="1.5"/>
<rect x="723" y="445" width="5" height="6" fill="#e06000" />
<circle cx="722" cy="449" r="2.4" fill="none" stroke="#000" stroke-width="1.5"/>
<rect x="650" y="429" width="5" height="6" fill="#e06000" />
<circle cx="649" cy="433" r="2.4" fill="none" stroke="#000" stroke-width="1.5"/>
<circle cx="682" cy="448" r="2.4" fill="none" stroke="#000" stroke-width="1.5"/>
<circle cx="607" cy="446" r="2.4" fill="none" stroke="#000" stroke-width="1.5"/>
<circle cx="606" cy="450" r="2.4" fill="none" stroke="#000" stroke-width="1.5"/>
<rect x="618" y="447" width="5" height="6" fill="#c09800" />
<circle cx="617" cy="451" r="2.4" fill="none" stroke="#000" stroke-width="1.5"/>
<rect x="730" y="445" width="5" height="6" fill="#e06000" />
<circle cx="729" cy="449" r="2.4" fill="none" stroke="#000" stroke-width="1.5"/>
<rect x="661" y="435" width="5" height="6" fill="#e06000" />
<circle cx="660" cy="439" r="2.4" fill="none" stroke="#000" stroke-width="1.5"/>
<circle cx="690" cy="432" r="2.4" fill="none" stroke="#000" stroke-width="1.5"/>
<rect x="650" y="428" width="5" height="6" fill="#c09800" />
<circle cx="649" cy="432" r="2.4" fill="none" stroke="#000" stroke-width="1.5"/>
<circle cx="659" cy="433" r="2.4" fill="none" stroke="#000" stroke-width="1.5"/>
<rect x="700" y="447" width="5" height="6" fill="#e06000" />
<circle cx="699" cy="451" r="2.4" fill="none" stroke="#000" stroke-width="1.5"/>
<rect x="592" y="444" width="5" height="6" fill="#e06000" />
<circle cx="591" cy="448" r="2.4" fill="none" stroke="#000" stroke-width="1.5"/>
<circle cx="646" cy="450" r="2.4" fill="none" stroke="#000" stroke-width="1.5"/>
<circle cx="621" cy="453" r="2.4" fill="none" stroke="#000" stroke-width="1.5"/>
<rect x="669" y="460" width="5" height="6" fill="#e06000" />
<circle cx="668" cy="464" r="2.4" fill="none" stroke="#000" stroke-width="1.5"/>
<rect x="686" y="455" width="5" height="6" fill="#c09800" />
<circle cx="685" cy="459" r="2.4" fill="none" stroke="#000" stroke-width="1.5"/>
<rect x="678" y="462" width="5" height="6" fill="#c09800" />
<circle cx="677" cy="466" r="2.4" fill="none" stroke="#000" stroke-width="1.5"/>
<circle cx="592" cy="467" r="2.4" fill="none" stroke="#000" stroke-width="1.5"/>
<circle cx="633" cy="461" r="2.4" fill="none" stroke="#000" stroke-width="1.5"/>
<circle cx="622" cy="453" r="2.4" fill="none" stroke="#000" stroke-width="1.5"/>
<rect x="619" y="448" width="5" height="6" fill="#e06000" />
<circle cx="618" cy="452" r="2.4" fill="none" stroke="#000" stroke-width="1.5"/>
<rect x="613" y="452" width="5" height="6" fill="#c09800" />
<circle cx="612" cy="456" r="2.4" fill="none" stroke="#000" stroke-width="1.5"/>
<rect x="626" y="456" width="5" height="6" fill="#e06000" />
<circle cx="625" cy="460" r="2.4" fill="none" stroke="#000" stroke-width="1.5"/>
<rect x="586" y="451" width="5" height="6" fill="#c09800" />
<circle cx="585" cy="455" r="2.4" fill="none" stroke="#000" stroke-width="1.5"/>
<circle cx="665" cy="454" r="2.4" fill="none" stroke="#000" stroke-width="1.5"/>
<circle cx="722" cy="452" r="2.4" fill="none" stroke="#000" stroke-width="1.5"/>
<circle cx="647" cy="460" r="2.4" fill="none" stroke="#000" stroke-width="1.5"/>
<circle cx="641" cy="460" r="2.4" fill="none" stroke="#000" stroke-width="1.5"/>
<circle cx="729" cy="457" r="2.4" fill="none" stroke="#000" stroke-width="1.5"/>
<circle cx="688" cy="463" r="2.4" fill="none" stroke="#000" stroke-width="1.5"/>
<rect x="635" y="447" width="5" height="6" fill="#e06000" />
<circle cx="634" cy="451" r="2.4" fill="none" stroke="#000" stroke-width="1.5"/>
<rect x="694" y="451" width="5" height="6" fill="#e06000" />
<circle cx="693" cy="455" r="2.4" fill="none" stroke="#000" stroke-width="1.5"/>
<circle cx="708" cy="467" r="2.4" fill="none" stroke="#000" stroke-width="1.5"/>
<rect x="625" y="451" width="5" height="6" fill="#c09800" />
<circle cx="624" cy="455" r="2.4" fill="none" stroke="#000" stroke-width="1.5"/>
<rect x="607" y="455" width="5" height="6" fill="#c09800" />
<circle cx="606" cy="459" r="2.4" fill="none" stroke="#000" stroke-width="1.5"/>
<rect x="729" y="457" width="5" height="6" fill="#c09800" />
<circle cx="728" cy="461" r="2.4" fill="none" stroke="#000" stroke-width="1.5"/>
<rect x="629" y="453" width="5" height="6" fill="#e06000" />
<circle cx="628" cy="457" r="2.4" fill="none" stroke="#000" stroke-width="1.5"/>
<rect x="654" y="456" width="5" height="6" fill="#c09800" />
<circle cx="653" cy="460" r="2.4" fill="none" stroke="#000" stroke-width="1.5"/>
<rect x="584" y="451" width="5" height="6" fill="#e06000" />
<circle cx="583" cy="455" r="2.4" fill="none" stroke="#000" stroke-width="1.5"/>
<rect x="589" y="446" width="5" height="6" fill="#e06000" />
<circle cx="588" cy="450" r="2.4" fill="none" stroke="#000" stroke-width="1.5"/>
<circle cx="670" cy="461" r="2.4" fill="none" stroke="#000" stroke-width="1.5"/>
<circle cx="681" cy="464" r="2.4" fill="none" stroke="#000" stroke-width="1.5"/>
<circle cx="640" cy="457" r="2.4" fill="none" stroke="#000" stroke-width="1.5"/>
<circle cx="604" cy="464" r="2.4" fill="none" stroke="#000" stroke-width="1.5"/>
<circle cx="589" cy="467" r="2.4" fill="none" stroke="#000" stroke-width="1.5"/>
<circle cx="676" cy="465" r="2.4" fill="none" stroke="#000" stroke-width="1.5"/>
<circle cx="603" cy="460" r="2.4" fill="none" stroke="#000" stroke-width="1.5"/>
<circle cx="707" cy="466" r="2.4" fill="none" stroke="#000" stroke-width="1.5"/>
<circle cx="670" cy="468" r="2.4" fill="none" stroke="#000" stroke-width="1.5"/>
<rect x="687" y="451" width="5" height="6" fill="#e06000" />
<circle cx="686" cy="455" r="2.4" fill="none" stroke="#000" stroke-width="1.5"/>
<circle cx="636" cy="452" r="2.4" fill="none" stroke="#000" stroke-width="1.5"/>
<circle cx="666" cy="463" r="2.4" fill="none" stroke="#000" stroke-width="1.5"/>
<rect x="685" y="456" width="5" height="6" fill="#c09800" />
<circle cx="684" cy="460" r="2.4" fill="none" stroke="#000" stroke-width="1.5"/>
<circle cx="694" cy="460" r="2.4" fill="none" stroke="#000" stroke-width="1.5"/>
<circle cx="681" cy="451" r="2.4" fill="none" stroke="#000" stroke-width="1.5"/>
<rect x="621" y="447" width="5" height="6" fill="#c09800" />
<circle cx="620" cy="451" r="2.4" fill="none" stroke="#000" stroke-width="1.5"/>
<circle cx="613" cy="465" r="2.4" fill="none" stroke="#000" stroke-width="1.5"/>
<circle cx="656" cy="458" r="2.4" fill="none" stroke="#000" stroke-width="1.5"/>
<circle cx="685" cy="465" r="2.4" fill="none" stroke="#000" stroke-width="1.5"/>
<rect x="679" y="448" width="5" height="6" fill="#e06000" />
<circle cx="678" cy="452" r="2.4" fill="none" stroke="#000" stroke-width="1.5"/>
<circle cx="693" cy="456" r="2.4" fill="none" stroke="#000" stroke-width="1.5"/>
<rect x="585" y="447" width="5" height="6" fill="#c09800" />
<circle cx="584" cy="451" r="2.4" fill="none" stroke="#000" stroke-width="1.5"/>
<rect x="687" y="460" width="5" height="6" fill="#c09800" />
<circle cx="686" cy="464" r="2.4" fill="none" stroke="#000" stroke-width="1.5"/>
<rect x="653" y="455" width="5" height="6" fill="#c09800" />
<circle cx="652" cy="459" r="2.4" fill="none" stroke="#000" stroke-width="1.5"/>
<circle cx="612" cy="470" r="2.4" fill="none" stroke="#000" stroke-width="1.5"/>
<circle cx="585" cy="459" r="2.4" fill="none" stroke="#000" stroke-width="1.5"/>
<rect x="728" y="455" width="5" height="6" fill="#e06000" />
<circle cx="727" cy="459" r="2.4" fill="none" stroke="#000" stroke-width="1.5"/>
<circle cx="724" cy="454" r="2.4" fill="none" stroke="#000" stroke-width="1.5"/>
<circle cx="603" cy="460" r="2.4" fill="none" stroke="#000" stroke-width="1.5"/>
<circle cx="602" cy="466" r="2.4" fill="none" stroke="#000" stroke-width="1.5"/>
<rect x="716" y="460" width="5" height="6" fill="#c09800" />
<circle cx="715" cy="464" r="2.4" fill="none" stroke="#000" stroke-width="1.5"/>
<rect x="656" y="446" width="5" height="6" fill="#c09800" />
<circle cx="655" cy="450" r="2.4" fill="none" stroke="#000" stroke-width="1.5"/>
<rect x="651" y="452" width="5" height="6" fill="#e06000" />
<circle cx="650" cy="456" r="2.4" fill="none" stroke="#000" stroke-width="1.5"/>
<circle cx="551" cy="421" r="2.4" fill="none" stroke="#000" stroke-width="1.5"/>
<circle cx="557" cy="421" r="2.4" fill="none" stroke="#000" stroke-width="1.5"/>
<circle cx="681" cy="406" r="2.4" fill="none" stroke="#000" stroke-width="1.5"/>
<circle cx="688" cy="406" r="2.4" fill="none" stroke="#000" stroke-width="1.5"/>
<circle cx="697" cy="406" r="2.4" fill="none" stroke="#000" stroke-width="1.5"/>
<circle cx="704" cy="406" r="2.4" fill="none" stroke="#000" stroke-width="1.5"/>
<circle cx="598" cy="421" r="2.4" fill="none" stroke="#000" stroke-width="1.5"/>
<circle cx="663" cy="402" r="5" fill="#c09800" stroke="#d04000" stroke-width="1"/>
<rect x="687" y="411" width="38" height="18" fill="#000" />
<rect x="688" y="412" width="36" height="16" fill="#c09800" />
<rect x="687" y="432" width="38" height="18" fill="#000" />
<rect x="688" y="433" width="36" height="16" fill="#c09800" />
<rect x="733" y="389" width="6" height="264" fill="#c09800" />
<circle cx="752" cy="404" r="6.5" fill="#c09800" stroke="#d04000" stroke-width="1"/>
<circle cx="752" cy="421" r="6.5" fill="#c09800" stroke="#d04000" stroke-width="1"/>
<circle cx="752" cy="439" r="6.5" fill="#c09800" stroke="#d04000" stroke-width="1"/>
<circle cx="752" cy="456" r="6.5" fill="#c09800" stroke="#d04000" stroke-width="1"/>
<path d="M998 364 V555 H960 Q937 555 937 580 V618 H765 V650 H1033 V364 Z" fill="#f00"/>
<rect x="995" y="364" width="4" height="256" fill="#c09800" />
<rect x="996" y="399" width="30" height="7" fill="#c09800" />
<rect x="1014" y="399" width="12" height="162" fill="#c09800" />
<rect x="996" y="430" width="20" height="9" fill="#c09800" />
<rect x="999" y="406" width="15" height="24" fill="#ff0000" />
<rect x="784" y="641" width="150" height="6" fill="#c09800" />
<rect x="933" y="562" width="7" height="86" fill="#c09800" />
<rect x="765" y="612" width="7" height="36" fill="#c09800" />
<rect x="907" y="615" width="26" height="25" fill="#c09800" />
<rect x="910" y="618" width="21" height="21" fill="#ff0000" />
<rect x="895" y="568" width="40" height="47" fill="#449900" />
<rect x="765" y="400" width="175" height="6" fill="#c09800" />
<rect x="765" y="400" width="6" height="162" fill="#c09800" />
<rect x="765" y="556" width="175" height="7" fill="#c09800" />
<rect x="934" y="400" width="6" height="162" fill="#c09800" />
<rect x="733" y="347" width="6" height="306" fill="#c09800" />
<path d="M717 223 L806 223 L806 232" fill="none" stroke="#000" stroke-width="2"/>
<path d="M717 252 L783 252 L783 233 L806 233" fill="none" stroke="#000" stroke-width="2"/>
<path d="M725 252 L725 308 L759 308" fill="none" stroke="#000" stroke-width="2"/>
<rect x="745" y="233" width="23" height="19" fill="#c09800" />
<rect x="745" y="283" width="23" height="19" fill="#c09800" />
<rect x="784" y="234" width="12" height="16" fill="#000" />
<rect x="785" y="235" width="10" height="13" fill="#c09800" />
<rect x="806" y="230" width="33" height="36" fill="#000" />
<rect x="800" y="249" width="5" height="14" fill="#c09800" />
<rect x="808" y="249" width="5" height="14" fill="#c09800" />
<rect x="818" y="249" width="5" height="14" fill="#c09800" />
<rect x="829" y="249" width="5" height="14" fill="#c09800" />
<rect x="813" y="236" width="5" height="5" fill="#c09800" />
<rect x="813" y="242" width="5" height="4" fill="#e06000" />
<rect x="820" y="236" width="5" height="5" fill="#c09800" />
<rect x="820" y="242" width="5" height="4" fill="#e06000" />
<rect x="827" y="236" width="5" height="5" fill="#c09800" />
<rect x="827" y="242" width="5" height="4" fill="#e06000" />
<rect x="834" y="236" width="5" height="5" fill="#c09800" />
<rect x="834" y="242" width="5" height="4" fill="#e06000" />
<rect x="804" y="269" width="23" height="14" fill="#c09800" />
<rect x="802" y="267" width="4" height="3" fill="#c09800" />
<rect x="825" y="267" width="4" height="3" fill="#c09800" />
<rect x="818" y="287" width="21" height="40" fill="#000" />
<rect x="801" y="289" width="5" height="17" fill="#c09800" />
<rect x="808" y="289" width="5" height="17" fill="#c09800" />
<rect x="818" y="289" width="5" height="17" fill="#c09800" />
<rect x="829" y="289" width="5" height="17" fill="#c09800" />
<rect x="797" y="307" width="45" height="21" fill="#000" fill-opacity="0"/>
<path d="M797 327 L797 316 L785 316" fill="none" stroke="#000" stroke-width="1.5"/>
<path d="M758 318 L758 340 L795 340" fill="none" stroke="#000" stroke-width="1.5"/>
<rect x="759" y="313" width="24" height="25" fill="#000" />
<rect x="760" y="314" width="12" height="19" fill="#c09800" />
<rect x="739" y="312" width="13" height="21" fill="#c09800" />
<rect x="787" y="309" width="7" height="16" fill="#c09800" />
<rect x="810" y="310" width="5" height="5" fill="#e06000" />
<rect x="818" y="310" width="5" height="5" fill="#e06000" />
<rect x="826" y="310" width="5" height="5" fill="#c09800" />
<rect x="781" y="296" width="8" height="9" fill="#c09800" />
<rect x="781" y="306" width="8" height="7" fill="#c09800" />
<path d="M760 343 L832 343 L832 365 L760 365 L760 343" fill="none" stroke="#000" stroke-width="1.5"/>
<rect x="770" y="346" width="7" height="6" fill="#c09800" />
<rect x="779" y="346" width="7" height="6" fill="#e06000" />
<rect x="788" y="346" width="7" height="6" fill="#c09800" />
<rect x="800" y="346" width="7" height="6" fill="#c09800" />
<rect x="767" y="355" width="10" height="8" fill="#c09800" />
<rect x="785" y="356" width="8" height="8" fill="#c09800" />
<rect x="805" y="352" width="20" height="9" fill="#c09800" />
<path d="M770 367 L800 367 L800 383 L830 383 L830 368" fill="none" stroke="#000" stroke-width="1.5"/>
<rect x="772" y="369" width="8" height="6" fill="#c09800" />
<rect x="785" y="372" width="9" height="7" fill="#c09800" />
<rect x="808" y="373" width="18" height="7" fill="#c09800" />
<circle cx="843" cy="362" r="6.5" fill="#c09800" stroke="#d04000" stroke-width="0.8"/>
<circle cx="843" cy="380" r="6.5" fill="#c09800" />
<circle cx="829" cy="372" r="2" fill="none" stroke="#000"/>
<rect x="852" y="224" width="12" height="14" fill="#c09800" />
<circle cx="877" cy="231" r="6.5" fill="#c09800" />
<path d="M857 224 V218 Q857 211 866 211 H893 Q902 211 902 220 V230" fill="none" stroke="#000" stroke-width="2"/>
<path d="M864 224 Q868 216 880 216 H893 Q897 217 897 224" fill="none" stroke="#000" stroke-width="1.5"/>
<path d="M877 235 L888 245 H892" fill="none" stroke="#000" stroke-width="1.5"/>
<circle cx="859" cy="249" r="6.5" fill="#c09800" stroke="#000" stroke-width="0.8"/>
<circle cx="877" cy="249" r="6.5" fill="#c09800" stroke="#000" stroke-width="0.8"/>
<circle cx="859" cy="267" r="6.5" fill="#c09800" stroke="#000" stroke-width="0.8"/>
<circle cx="877" cy="267" r="6.5" fill="#c09800" stroke="#000" stroke-width="0.8"/>
<circle cx="859" cy="284" r="6.5" fill="#c09800" stroke="#000" stroke-width="0.8"/>
<circle cx="877" cy="284" r="6.5" fill="#c09800" stroke="#000" stroke-width="0.8"/>
<circle cx="859" cy="303" r="6.5" fill="#c09800" stroke="#000" stroke-width="0.8"/>
<circle cx="877" cy="303" r="6.5" fill="#c09800" stroke="#000" stroke-width="0.8"/>
<circle cx="859" cy="320" r="6.5" fill="#c09800" stroke="#000" stroke-width="0.8"/>
<circle cx="877" cy="320" r="6.5" fill="#c09800" stroke="#000" stroke-width="0.8"/>
<circle cx="859" cy="338" r="6.5" fill="#c09800" stroke="#000" stroke-width="0.8"/>
<circle cx="877" cy="338" r="6.5" fill="#c09800" stroke="#000" stroke-width="0.8"/>
<rect x="856" y="303" width="6" height="35" fill="#c09800" />
<rect x="874" y="303" width="6" height="35" fill="#c09800" />
<rect x="893" y="241" width="15" height="43" fill="#e06000" />
<rect x="894" y="242" width="13" height="41" fill="#c09800" />
<circle cx="889" cy="245" r="2" fill="none" stroke="#000" stroke-width="1.2"/>
<circle cx="912" cy="245" r="2" fill="none" stroke="#000" stroke-width="1.2"/>
<circle cx="889" cy="254" r="2" fill="none" stroke="#000" stroke-width="1.2"/>
<circle cx="912" cy="254" r="2" fill="none" stroke="#000" stroke-width="1.2"/>
<circle cx="889" cy="262" r="2" fill="none" stroke="#000" stroke-width="1.2"/>
<circle cx="912" cy="262" r="2" fill="none" stroke="#000" stroke-width="1.2"/>
<circle cx="889" cy="271" r="2" fill="none" stroke="#000" stroke-width="1.2"/>
<circle cx="912" cy="271" r="2" fill="none" stroke="#000" stroke-width="1.2"/>
<circle cx="889" cy="280" r="2" fill="none" stroke="#000" stroke-width="1.2"/>
<circle cx="912" cy="280" r="2" fill="none" stroke="#000" stroke-width="1.2"/>
<rect x="899" y="283" width="2.5" height="65" fill="#000" />
<rect x="897" y="334" width="7" height="24" fill="#c09800" />
<rect x="897" y="345" width="7" height="4" fill="#e06000" />
<rect x="898" y="355" width="5" height="4" fill="#e06000" />
<rect x="895" y="224" width="12" height="14" fill="#c09800" />
<rect x="907" y="223" width="13" height="16" fill="#e06000" />
<rect x="908" y="224" width="11" height="14" fill="#c09800" />
<rect x="921" y="224" width="12" height="14" fill="#c09800" />
<rect x="934" y="224" width="11" height="14" fill="#c09800" />
<path d="M946 224 L960 224 L960 240 L946 240 L946 224" fill="none" stroke="#000" stroke-width="1.5"/>
<rect x="948" y="225" width="10" height="13" fill="#c09800" />
<rect x="963" y="224" width="8" height="14" fill="#c09800" />
<path d="M926 241 L926 290 L960 290 L960 241" fill="none" stroke="#000" stroke-width="1.5"/>
<rect x="927" y="243" width="12" height="40" fill="#c09800" />
<rect x="946" y="245" width="11" height="12" fill="#c09800" />
<rect x="952" y="266" width="10" height="12" fill="#c09800" />
<rect x="952" y="278" width="10" height="8" fill="#c09800" />
<path d="M963 224 L982 224 L982 240 L1020 240 L1020 270 L963 270 L963 224" fill="none" stroke="#000" stroke-width="1.5"/>
<rect x="982" y="242" width="38" height="15" fill="#c09800" />
<rect x="982" y="283" width="38" height="20" fill="#c09800" />
<path d="M981 282 L1021 282 L1021 304 L981 304 L981 282" fill="none" stroke="#000" stroke-width="1.5"/>
<rect x="968" y="245" width="8" height="12" fill="#c09800" />
<rect x="968" y="265" width="8" height="10" fill="#c09800" />
<circle cx="915" cy="289" r="2" fill="none" stroke="#000" stroke-width="1.2"/>
<circle cx="925" cy="289" r="2" fill="none" stroke="#000" stroke-width="1.2"/>
<circle cx="940" cy="289" r="2" fill="none" stroke="#000" stroke-width="1.2"/>
<circle cx="950" cy="289" r="2" fill="none" stroke="#000" stroke-width="1.2"/>
<circle cx="963" cy="289" r="2" fill="none" stroke="#000" stroke-width="1.2"/>
<circle cx="918.8" cy="315.8" r="7.2" fill="#d04000" />
<circle cx="918" cy="315" r="7" fill="#c09800" />
<circle cx="936.8" cy="315.8" r="7.2" fill="#d04000" />
<circle cx="936" cy="315" r="7" fill="#c09800" />
<circle cx="953.8" cy="315.8" r="7.2" fill="#d04000" />
<circle cx="953" cy="315" r="7" fill="#c09800" />
<circle cx="972.8" cy="315.8" r="7.2" fill="#d04000" />
<circle cx="972" cy="315" r="7" fill="#c09800" />
<circle cx="990.8" cy="315.8" r="7.2" fill="#d04000" />
<circle cx="990" cy="315" r="7" fill="#c09800" />
<circle cx="1008.8" cy="315.8" r="7.2" fill="#d04000" />
<circle cx="1008" cy="315" r="7" fill="#c09800" />
<circle cx="918.8" cy="332.8" r="7.2" fill="#d04000" />
<circle cx="918" cy="332" r="7" fill="#c09800" />
<circle cx="936.8" cy="332.8" r="7.2" fill="#d04000" />
<circle cx="936" cy="332" r="7" fill="#c09800" />
<circle cx="953.8" cy="332.8" r="7.2" fill="#d04000" />
<circle cx="953" cy="332" r="7" fill="#c09800" />
<circle cx="972.8" cy="332.8" r="7.2" fill="#d04000" />
<circle cx="972" cy="332" r="7" fill="#c09800" />
<circle cx="990.8" cy="332.8" r="7.2" fill="#d04000" />
<circle cx="990" cy="332" r="7" fill="#c09800" />
<circle cx="1008.8" cy="332.8" r="7.2" fill="#d04000" />
<circle cx="1008" cy="332" r="7" fill="#c09800" />
<circle cx="918.8" cy="350.8" r="7.2" fill="#d04000" />
<circle cx="918" cy="350" r="7" fill="#c09800" />
<circle cx="936.8" cy="350.8" r="7.2" fill="#d04000" />
<circle cx="936" cy="350" r="7" fill="#c09800" />
<circle cx="953.8" cy="350.8" r="7.2" fill="#d04000" />
<circle cx="953" cy="350" r="7" fill="#c09800" />
<circle cx="972.8" cy="350.8" r="7.2" fill="#d04000" />
<circle cx="972" cy="350" r="7" fill="#c09800" />
<circle cx="990.8" cy="350.8" r="7.2" fill="#d04000" />
<circle cx="990" cy="350" r="7" fill="#c09800" />
<circle cx="1008.8" cy="350.8" r="7.2" fill="#d04000" />
<circle cx="1008" cy="350" r="7" fill="#c09800" />
<path d="M918 357 V374 Q920 382 930 383 H958 V373" fill="none" stroke="#000" stroke-width="1.5"/>
<rect x="942" y="371" width="14" height="13" fill="#c09800" />
<rect x="972" y="371" width="13" height="13" fill="#c09800" />
<circle cx="1012" cy="213" r="10.5" fill="#000" />
<circle cx="1012" cy="213" r="9.5" fill="#ff0000" />
<circle cx="1012" cy="213" r="3.5" fill="#c09800" />
<rect x="800" y="462" width="52" height="51" fill="#000" />
<rect x="808.0" y="458" width="2.5" height="8" fill="#c09800" />
<rect x="808.0" y="509" width="2.5" height="8" fill="#c09800" />
<rect x="796" y="469.0" width="8" height="2.5" fill="#c09800" />
<rect x="848" y="469.0" width="8" height="2.5" fill="#c09800" />
<rect x="812.5" y="458" width="2.5" height="8" fill="#c09800" />
<rect x="812.5" y="509" width="2.5" height="8" fill="#c09800" />
<rect x="796" y="473.5" width="8" height="2.5" fill="#c09800" />
<rect x="848" y="473.5" width="8" height="2.5" fill="#c09800" />
<rect x="817.0" y="458" width="2.5" height="8" fill="#c09800" />
<rect x="817.0" y="509" width="2.5" height="8" fill="#c09800" />
<rect x="796" y="478.0" width="8" height="2.5" fill="#c09800" />
<rect x="848" y="478.0" width="8" height="2.5" fill="#c09800" />
<rect x="821.5" y="458" width="2.5" height="8" fill="#c09800" />
<rect x="821.5" y="509" width="2.5" height="8" fill="#c09800" />
<rect x="796" y="482.5" width="8" height="2.5" fill="#c09800" />
<rect x="848" y="482.5" width="8" height="2.5" fill="#c09800" />
<rect x="826.0" y="458" width="2.5" height="8" fill="#c09800" />
<rect x="826.0" y="509" width="2.5" height="8" fill="#c09800" />
<rect x="796" y="487.0" width="8" height="2.5" fill="#c09800" />
<rect x="848" y="487.0" width="8" height="2.5" fill="#c09800" />
<rect x="830.5" y="458" width="2.5" height="8" fill="#c09800" />
<rect x="830.5" y="509" width="2.5" height="8" fill="#c09800" />
<rect x="796" y="491.5" width="8" height="2.5" fill="#c09800" />
<rect x="848" y="491.5" width="8" height="2.5" fill="#c09800" />
<rect x="835.0" y="458" width="2.5" height="8" fill="#c09800" />
<rect x="835.0" y="509" width="2.5" height="8" fill="#c09800" />
<rect x="796" y="496.0" width="8" height="2.5" fill="#c09800" />
<rect x="848" y="496.0" width="8" height="2.5" fill="#c09800" />
<rect x="839.5" y="458" width="2.5" height="8" fill="#c09800" />
<rect x="839.5" y="509" width="2.5" height="8" fill="#c09800" />
<rect x="796" y="500.5" width="8" height="2.5" fill="#c09800" />
<rect x="848" y="500.5" width="8" height="2.5" fill="#c09800" />
<rect x="844.0" y="458" width="2.5" height="8" fill="#c09800" />
<rect x="844.0" y="509" width="2.5" height="8" fill="#c09800" />
<rect x="796" y="505.0" width="8" height="2.5" fill="#c09800" />
<rect x="848" y="505.0" width="8" height="2.5" fill="#c09800" />
<rect x="804" y="467" width="41" height="41" fill="#e06000" />
<rect x="805" y="468" width="39" height="39" fill="#c09800" />
<rect x="813" y="476" width="2" height="2" fill="#5ab000" />
<rect x="813" y="487" width="2" height="2" fill="#5ab000" />
<rect x="813" y="498" width="2" height="2" fill="#5ab000" />
<rect x="824" y="476" width="2" height="2" fill="#5ab000" />
<rect x="824" y="487" width="2" height="2" fill="#5ab000" />
<rect x="824" y="498" width="2" height="2" fill="#5ab000" />
<rect x="835" y="476" width="2" height="2" fill="#5ab000" />
<rect x="835" y="487" width="2" height="2" fill="#5ab000" />
<rect x="835" y="498" width="2" height="2" fill="#5ab000" />
<rect x="873" y="478" width="17" height="28" fill="#000" />
<rect x="875" y="480" width="13" height="24" fill="#c09800" />
<rect x="876" y="481" width="1.5" height="1.5" fill="#5ab000" />
<rect x="876" y="485" width="1.5" height="1.5" fill="#5ab000" />
<rect x="876" y="489" width="1.5" height="1.5" fill="#5ab000" />
<rect x="876" y="493" width="1.5" height="1.5" fill="#5ab000" />
<rect x="876" y="497" width="1.5" height="1.5" fill="#5ab000" />
<rect x="876" y="501" width="1.5" height="1.5" fill="#5ab000" />
<rect x="879" y="481" width="1.5" height="1.5" fill="#5ab000" />
<rect x="879" y="485" width="1.5" height="1.5" fill="#5ab000" />
<rect x="879" y="489" width="1.5" height="1.5" fill="#5ab000" />
<rect x="879" y="493" width="1.5" height="1.5" fill="#5ab000" />
<rect x="879" y="497" width="1.5" height="1.5" fill="#5ab000" />
<rect x="879" y="501" width="1.5" height="1.5" fill="#5ab000" />
<rect x="882" y="481" width="1.5" height="1.5" fill="#5ab000" />
<rect x="882" y="485" width="1.5" height="1.5" fill="#5ab000" />
<rect x="882" y="489" width="1.5" height="1.5" fill="#5ab000" />
<rect x="882" y="493" width="1.5" height="1.5" fill="#5ab000" />
<rect x="882" y="497" width="1.5" height="1.5" fill="#5ab000" />
<rect x="882" y="501" width="1.5" height="1.5" fill="#5ab000" />
<rect x="885" y="481" width="1.5" height="1.5" fill="#5ab000" />
<rect x="885" y="485" width="1.5" height="1.5" fill="#5ab000" />
<rect x="885" y="489" width="1.5" height="1.5" fill="#5ab000" />
<rect x="885" y="493" width="1.5" height="1.5" fill="#5ab000" />
<rect x="885" y="497" width="1.5" height="1.5" fill="#5ab000" />
<rect x="885" y="501" width="1.5" height="1.5" fill="#5ab000" />
<rect x="866" y="475" width="6" height="6" fill="#e06000" />
<rect x="892" y="475" width="6" height="6" fill="#c09800" />
<rect x="866" y="500" width="6" height="6" fill="#c09800" />
<rect x="892" y="500" width="6" height="6" fill="#e06000" />
<rect x="840" y="526" width="15" height="20" fill="#e06000" />
<rect x="841" y="527" width="13" height="18" fill="#c09800" />
<rect x="867" y="526" width="18" height="20" fill="#e06000" />
<rect x="868" y="527" width="16" height="18" fill="#c09800" />
<rect x="844" y="490" width="4" height="10" fill="#c09800" />
<rect x="795" y="447" width="12" height="12" fill="#c09800" />
<rect x="809" y="430" width="12" height="10" fill="#c09800" />
<rect x="785" y="418" width="12" height="11" fill="#c09800" />
<rect x="822" y="448" width="6" height="6" fill="#c09800" />
<path d="M786 550 Q780 540 792 532 H804 V550 Z" fill="none" stroke="#000" stroke-width="1.5"/>
<rect x="787" y="530" width="8" height="8" fill="#c09800" />
<rect x="797" y="535" width="8" height="9" fill="#e06000" />
<rect x="791" y="543" width="7" height="6" fill="#c09800" />
<path d="M805 513 L790 530" fill="none" stroke="#000" stroke-width="1"/>
<path d="M830 513 L830 525 L840 530" fill="none" stroke="#000" stroke-width="1"/>
<path d="M852 495 L866 495" fill="none" stroke="#000" stroke-width="1"/>
<path d="M995 431 H942 Q911 431 911 460 V488 Q911 500 904 507 Q900 512 900 522 V618" fill="none" stroke="#000" stroke-width="3"/>
<path d="M995 440 H946 Q919 440 919 465 V490 Q919 503 912 510 Q908 515 908 525 V618" fill="none" stroke="#000" stroke-width="3"/>
<rect x="947" y="426" width="6" height="8" fill="#c09800" />
<rect x="957" y="426" width="6" height="8" fill="#c09800" />
<rect x="966" y="426" width="6" height="8" fill="#c09800" />
<rect x="976" y="426" width="6" height="8" fill="#c09800" />
<rect x="985" y="426" width="6" height="8" fill="#c09800" />
<rect x="902" y="560" width="5" height="6" fill="#c09800" />
<rect x="902" y="572" width="5" height="6" fill="#c09800" />
<rect x="902" y="584" width="5" height="6" fill="#c09800" />
<rect x="902" y="596" width="5" height="6" fill="#c09800" />
<rect x="902" y="608" width="5" height="6" fill="#c09800" />
<rect x="764" y="573" width="10" height="34" fill="#e06000" />
<rect x="765" y="573" width="9" height="15" fill="#c09800" />
<rect x="765" y="590" width="9" height="15" fill="#c09800" />
<rect x="792" y="573" width="10" height="23" fill="#e06000" />
<rect x="793" y="573" width="9" height="10" fill="#c09800" />
<rect x="793" y="585" width="9" height="10" fill="#c09800" />
<rect x="805" y="573" width="10" height="29" fill="#e06000" />
<rect x="806" y="573" width="9" height="13" fill="#c09800" />
<rect x="806" y="588" width="9" height="13" fill="#c09800" />
<rect x="819" y="573" width="10" height="29" fill="#e06000" />
<rect x="820" y="573" width="9" height="13" fill="#c09800" />
<rect x="820" y="588" width="9" height="13" fill="#c09800" />
<rect x="848" y="573" width="10" height="29" fill="#e06000" />
<rect x="849" y="573" width="9" height="13" fill="#c09800" />
<rect x="849" y="588" width="9" height="13" fill="#c09800" />
<rect x="862" y="573" width="10" height="34" fill="#e06000" />
<rect x="863" y="573" width="9" height="15" fill="#c09800" />
<rect x="863" y="590" width="9" height="15" fill="#c09800" />
<rect x="875" y="573" width="10" height="29" fill="#e06000" />
<rect x="876" y="573" width="9" height="13" fill="#c09800" />
<rect x="876" y="588" width="9" height="13" fill="#c09800" />
<rect x="794" y="555" width="9" height="8" fill="#c09800" />
<rect x="809" y="555" width="9" height="8" fill="#c09800" />
<rect x="823" y="555" width="9" height="8" fill="#c09800" />
<rect x="852" y="555" width="9" height="8" fill="#c09800" />
<rect x="866" y="555" width="9" height="8" fill="#c09800" />
<rect x="880" y="555" width="9" height="8" fill="#c09800" />
<path d="M757 590 L764 590" fill="none" stroke="#000" stroke-width="1.5"/>
<path d="M830 605 L820 605 L818 598" fill="none" stroke="#000" stroke-width="1.5"/>
<rect x="717" y="305" width="3" height="40" fill="#c09800" />
<path d="M921 415 H959 V463 H921 Z" fill="none" stroke="#a0a0b8" stroke-width="1"/>
<path d="M880 553 H933 V569 H880 Z" fill="none" stroke="#a0a0b8" stroke-width="1"/>
<path d="M716 151 L921 415" fill="none" stroke="#a0a0b8" stroke-width="1"/>
<path d="M716 318 L921 416" fill="none" stroke="#a0a0b8" stroke-width="1"/>
<path d="M410 389 L921 463" fill="none" stroke="#a0a0b8" stroke-width="1"/>
<path d="M716 388 L959 462" fill="none" stroke="#a0a0b8" stroke-width="1"/>
<path d="M760 516 L933 554" fill="none" stroke="#a0a0b8" stroke-width="1"/>
<path d="M760 543 L933 570" fill="none" stroke="#a0a0b8" stroke-width="1"/>
<path d="M760 600 L933 569" fill="none" stroke="#e0e0e0" stroke-width="1"/>
<path d="M762 706 L933 569" fill="none" stroke="#ffffff" stroke-width="1"/>
<g stroke="#fff" stroke-width="1.2" fill="none"><circle cx="184" cy="689" r="5"/><path d="M176 689 H192 M184 681 V697 M178 683 L190 695 M190 683 L178 695"/></g><ellipse cx="1027" cy="178" rx="4" ry="3" fill="none" stroke="#fff" stroke-width="1.5"/><circle cx="1029" cy="420" r="3" fill="none" stroke="#80a0c0" stroke-width="1.5"/>
</svg>
<div class="a" style="left:150px;top:73px;width:1127px;height:2px;background:#eefcfc"></div>
<div class="a" style="left:1276px;top:73px;width:164px;height:723px;background:#3f7070;"></div>
<div class="a" style="left:1276px;top:73px;width:164px;height:2px;background:#cfeeee;"></div>
<div class="a" style="left:1277px;top:76px;width:42px;height:42px;background:#000;"></div>
<div class="a" style="left:1279px;top:78px;width:38px;height:38px;background:#9bd9d9;border-style:solid;border-width:2px;border-color:#e0ffff #3f7070 #3f7070 #e0ffff;"></div>
<div class="a" style="left:1283px;top:82px;width:30px;height:30px;background:transparent;border:1px solid #000;"></div>
<svg class="a" style="left:1279px;top:78px" width="38" height="38"><rect x="12.5" y="14" width="15" height="13" fill="none" stroke="#000" stroke-width="2"/><path d="M20 6.5 L15 10.5 H16.5 V17 H23.5 V10.5 H25 Z" fill="#000"/></svg>
<div class="a" style="left:1317px;top:76px;width:42px;height:42px;background:#000;"></div>
<div class="a" style="left:1319px;top:78px;width:38px;height:38px;background:#9bd9d9;border-style:solid;border-width:2px;border-color:#e0ffff #3f7070 #3f7070 #e0ffff;"></div>
<div class="a" style="left:1323px;top:82px;width:30px;height:30px;background:transparent;border:1px solid #000;"></div>
<svg class="a" style="left:1319px;top:78px" width="38" height="38"><rect x="12" y="11" width="15" height="13.5" fill="none" stroke="#000" stroke-width="2"/><path d="M19.5 31 L14.5 26.5 H16 V21 H23 V26.5 H24.5 Z" fill="#000"/></svg>
<div class="a" style="left:1357px;top:76px;width:42px;height:42px;background:#000;"></div>
<div class="a" style="left:1359px;top:78px;width:38px;height:38px;background:#9bd9d9;border-style:solid;border-width:2px;border-color:#e0ffff #3f7070 #3f7070 #e0ffff;"></div>
<div class="a" style="left:1363px;top:82px;width:30px;height:30px;background:transparent;border:1px solid #000;"></div>
<svg class="a" style="left:1359px;top:78px" width="38" height="38"><path d="M8.5 18.5 L18.5 9 L28.5 18.5" fill="none" stroke="#000" stroke-width="1.4"/><rect x="11.3" y="18.5" width="14.4" height="11" fill="none" stroke="#000" stroke-width="1.6"/><rect x="19.5" y="22" width="3" height="8" fill="none" stroke="#000" stroke-width="1.2"/><rect x="13.5" y="21.5" width="2" height="2" fill="none" stroke="#000" stroke-width="1"/><rect x="22.5" y="10" width="2.5" height="5" fill="none" stroke="#000" stroke-width="1.2"/><path d="M24 8.5 L25.5 7.5" stroke="#000" stroke-width="0.8"/></svg>
<div class="a" style="left:1397px;top:76px;width:42px;height:42px;background:#000;"></div>
<div class="a" style="left:1399px;top:78px;width:38px;height:38px;background:#9bd9d9;border-style:solid;border-width:2px;border-color:#e0ffff #3f7070 #3f7070 #e0ffff;"></div>
<div class="a" style="left:1403px;top:82px;width:30px;height:30px;background:transparent;border:1px solid #000;"></div>
<svg class="a" style="left:1399px;top:78px" width="38" height="38"><rect x="8.5" y="8.5" width="21" height="21" fill="none" stroke="#000" stroke-width="2.2"/><path d="M19.5 8.5 V29.5 M8.5 24 H29.5" stroke="#000" stroke-width="1.2"/><text x="20.8" y="22" font-size="5.5" font-weight="bold" font-family="Liberation Sans">xy</text></svg>
<div class="a" style="left:1277px;top:116px;width:42px;height:42px;background:#000;"></div>
<div class="a" style="left:1279px;top:118px;width:38px;height:38px;background:#9bd9d9;border-style:solid;border-width:2px;border-color:#e0ffff #3f7070 #3f7070 #e0ffff;"></div>
<div class="a" style="left:1283px;top:122px;width:30px;height:30px;background:transparent;border:1px solid #000;"></div>
<svg class="a" style="left:1279px;top:118px" width="38" height="38"><path d="M14 13.5 V11 H27.5 V26 H14 V23" fill="none" stroke="#000" stroke-width="2"/><path d="M6.5 19 L10.5 14.5 V16 H16.5 V22.5 H10.5 V24 Z" fill="#000"/></svg>
<div class="a" style="left:1317px;top:116px;width:42px;height:42px;background:#000;"></div>
<div class="a" style="left:1319px;top:118px;width:38px;height:38px;background:#9bd9d9;border-style:solid;border-width:2px;border-color:#e0ffff #3f7070 #3f7070 #e0ffff;"></div>
<div class="a" style="left:1323px;top:122px;width:30px;height:30px;background:transparent;border:1px solid #000;"></div>
<svg class="a" style="left:1319px;top:118px" width="38" height="38"><path d="M22.5 13.5 V11 H10 V26 H22.5 V23" fill="none" stroke="#000" stroke-width="2"/><path d="M31 19 L27 14.5 V16 H21 V22.5 H27 V24 Z" fill="#000"/></svg>
<div class="a" style="left:1357px;top:116px;width:42px;height:42px;background:#000;"></div>
<div class="a" style="left:1359px;top:118px;width:38px;height:38px;background:#9bd9d9;border-style:solid;border-width:2px;border-color:#e0ffff #3f7070 #3f7070 #e0ffff;"></div>
<div class="a" style="left:1363px;top:122px;width:30px;height:30px;background:transparent;border:1px solid #000;"></div>
<svg class="a" style="left:1359px;top:118px" width="38" height="38"><rect x="18" y="13.5" width="11.5" height="12" fill="none" stroke="#000" stroke-width="2"/><path d="M7 15.5 L10.5 12 V19 Z" fill="#000"/><path d="M9.5 15.5 H11.5 Q15 15.5 15 20 Q15 25 10.5 25" fill="none" stroke="#000" stroke-width="2.4"/></svg>
<div class="a" style="left:1397px;top:116px;width:42px;height:42px;background:#000;"></div>
<div class="a" style="left:1399px;top:118px;width:38px;height:38px;background:#9bd9d9;border-style:solid;border-width:2px;border-color:#e0ffff #3f7070 #3f7070 #e0ffff;"></div>
<div class="a" style="left:1403px;top:122px;width:30px;height:30px;background:transparent;border:1px solid #000;"></div>
<svg class="a" style="left:1399px;top:118px" width="38" height="38"><path d="M30 12 H11 V19 H29 V26 H10" fill="none" stroke="#000" stroke-width="2"/><path d="M31 8 L28.5 12 L31 15 M6 23 L9 26 L6 29" fill="none" stroke="#000" stroke-width="1"/></svg>
<div class="a" style="left:1277px;top:156px;width:42px;height:42px;background:#000;"></div>
<div class="a" style="left:1279px;top:158px;width:38px;height:38px;background:#9bd9d9;border-style:solid;border-width:2px;border-color:#e0ffff #3f7070 #3f7070 #e0ffff;"></div>
<div class="a" style="left:1283px;top:162px;width:30px;height:30px;background:transparent;border:1px solid #000;"></div>
<svg class="a" style="left:1279px;top:158px" width="38" height="38"><rect x="12.2" y="12.2" width="13.6" height="13.2" fill="none" stroke="#000" stroke-width="2.2"/><path d="M14 6 H23 L18.5 10 Z M14 31.5 H23 L18.5 27.5 Z M6 14 V23 L10 18.5 Z M31.5 14 V23 L27.5 18.5 Z" fill="#000"/><path d="M13 5.5 H24 M13 32 H24 M5.5 13 V24 M32 13 V24" stroke="#000" stroke-width="1"/></svg>
<div class="a" style="left:1317px;top:156px;width:42px;height:42px;background:#000;"></div>
<div class="a" style="left:1319px;top:158px;width:38px;height:38px;background:#9bd9d9;border-style:solid;border-width:2px;border-color:#e0ffff #3f7070 #3f7070 #e0ffff;"></div>
<div class="a" style="left:1323px;top:162px;width:30px;height:30px;background:transparent;border:1px solid #000;"></div>
<svg class="a" style="left:1319px;top:158px" width="38" height="38"><rect x="15" y="15" width="8" height="8" fill="none" stroke="#000" stroke-width="2"/><path d="M18.5 8 L13.5 12.5 H23.5 Z M18.5 30.5 L13.5 26 H23.5 Z M6.5 19 L11.5 14 V24 Z M31 19 L26 14 V24 Z" fill="#000"/></svg>
<div class="a" style="left:1357px;top:156px;width:42px;height:42px;background:#000;"></div>
<div class="a" style="left:1359px;top:158px;width:38px;height:38px;background:#9bd9d9;border-style:solid;border-width:2px;border-color:#e0ffff #3f7070 #3f7070 #e0ffff;"></div>
<div class="a" style="left:1363px;top:162px;width:30px;height:30px;background:transparent;border:1px solid #000;"></div>
<svg class="a" style="left:1359px;top:158px" width="38" height="38"><text x="9" y="25" font-size="15.5" font-weight="bold" font-family="Liberation Sans" fill="#000" letter-spacing="-1">1:2</text></svg>
<div class="a" style="left:1397px;top:156px;width:42px;height:42px;background:#000;"></div>
<div class="a" style="left:1399px;top:158px;width:38px;height:38px;background:#9bd9d9;border-style:solid;border-width:2px;border-color:#e0ffff #3f7070 #3f7070 #e0ffff;"></div>
<div class="a" style="left:1403px;top:162px;width:30px;height:30px;background:transparent;border:1px solid #000;"></div>
<svg class="a" style="left:1399px;top:158px" width="38" height="38"><rect x="8" y="8" width="21.5" height="21.5" fill="none" stroke="#000" stroke-width="2.6"/><text x="15.2" y="26" font-size="15" font-weight="bold" font-family="Liberation Sans" fill="#000">?</text></svg>
<div class="a" style="left:1277px;top:196px;width:42px;height:42px;background:#000;"></div>
<div class="a" style="left:1279px;top:198px;width:38px;height:38px;background:#9bd9d9;border-style:solid;border-width:2px;border-color:#e0ffff #3f7070 #3f7070 #e0ffff;"></div>
<div class="a" style="left:1283px;top:202px;width:30px;height:30px;background:transparent;border:1px solid #000;"></div>
<svg class="a" style="left:1279px;top:198px" width="38" height="38"><path d="M7.5 9 H23" stroke="#000" stroke-width="3.5"/><path d="M30.5 6.5 H25.5 Q22 9 25.5 11.5 H30.5" fill="none" stroke="#000" stroke-width="2.2"/><path d="M11 14.8 H29 V18.4 H11 L7.5 16.6 Z" fill="none" stroke="#000" stroke-width="1.2"/><path d="M15 29 Q12 24 17 21 Q24 18 27.5 23 Q29 29 22 31 Q17 32.5 15 29 Z" fill="none" stroke="#000" stroke-width="1.2"/><circle cx="20" cy="24" r="0.9" fill="#000"/><circle cx="23" cy="23" r="0.9" fill="#000"/></svg>
<div class="a" style="left:1317px;top:196px;width:42px;height:42px;background:#000;"></div>
<div class="a" style="left:1319px;top:198px;width:38px;height:38px;background:#9bd9d9;border-style:solid;border-width:2px;border-color:#e0ffff #3f7070 #3f7070 #e0ffff;"></div>
<div class="a" style="left:1323px;top:202px;width:30px;height:30px;background:transparent;border:1px solid #000;"></div>
<svg class="a" style="left:1319px;top:198px" width="38" height="38"><path d="M7 12.5 H31 M7 19.5 H31 M7 26.5 H31 M13 6 V31 M22 6 V31" stroke="#b4d0d0" stroke-width="0.8"/><rect x="18" y="17.5" width="13.5" height="4" fill="#300" stroke="#c00" stroke-width="0.8"/><circle cx="14" cy="19.6" r="5.3" fill="#100" stroke="#d00" stroke-width="1.2"/><path d="M6.5 30 L9.5 27 M7 27 H9.5 V29.5" fill="none" stroke="#000" stroke-width="1"/></svg>
<div class="a" style="left:1357px;top:196px;width:42px;height:42px;background:#000;"></div>
<div class="a" style="left:1359px;top:198px;width:38px;height:38px;background:#9bd9d9;border-style:solid;border-width:2px;border-color:#e0ffff #3f7070 #3f7070 #e0ffff;"></div>
<div class="a" style="left:1361px;top:200px;width:34px;height:34px;background:transparent;border:3px solid #d01010;"></div>
<div class="a" style="left:1363px;top:202px;width:30px;height:30px;background:transparent;border:1px solid #000;"></div>
<svg class="a" style="left:1359px;top:198px" width="38" height="38"><path d="M8 5.5 V17.4 H14 V31.5" fill="none" stroke="#e00" stroke-width="0.9"/><path d="M16.6 8.6 V26.5 H11" fill="none" stroke="#00f" stroke-width="1"/><circle cx="8.4" cy="17.4" r="2.6" fill="#e00"/><circle cx="16.6" cy="8.6" r="2.6" fill="#00f"/><circle cx="10.7" cy="27.4" r="2.6" fill="#00f"/><rect x="21" y="6.5" width="10.5" height="25" fill="none" stroke="#000" stroke-width="1"/><circle cx="26" cy="11.3" r="2.4" fill="none" stroke="#000"/><circle cx="26" cy="18.8" r="2.9" fill="#f9c04c" stroke="#000"/><circle cx="26" cy="26.3" r="2.4" fill="none" stroke="#000"/></svg>
<div class="a" style="left:1397px;top:196px;width:42px;height:42px;background:#000;"></div>
<div class="a" style="left:1399px;top:198px;width:38px;height:38px;background:#9bd9d9;border-style:solid;border-width:2px;border-color:#e0ffff #3f7070 #3f7070 #e0ffff;"></div>
<div class="a" style="left:1401px;top:200px;width:34px;height:34px;background:transparent;border:3px solid #d01010;"></div>
<div class="a" style="left:1403px;top:202px;width:30px;height:30px;background:transparent;border:1px solid #000;"></div>
<svg class="a" style="left:1399px;top:198px" width="38" height="38"><path d="M8.4 5.5 V17.4 M16.8 8.6 V27.2 H10.7" fill="none" stroke="#000" stroke-width="1"/><path d="M10.5 15.8 H16.8 M12 14 V16 M14 14 V16 M16 14 V16" stroke="#e00" stroke-width="1.3"/><circle cx="8.4" cy="17.4" r="2.6" fill="#000"/><circle cx="16.8" cy="8.6" r="2.6" fill="#000"/><circle cx="10.7" cy="27.4" r="2.6" fill="#000"/><rect x="21.2" y="6.5" width="9" height="25" fill="none" stroke="#000" stroke-width="1"/><circle cx="25.8" cy="11.9" r="3.4" fill="#e00" stroke="#000" stroke-width="0.8"/><circle cx="25.8" cy="19.6" r="2.4" fill="none" stroke="#000"/><circle cx="25.8" cy="26.8" r="2.4" fill="none" stroke="#000"/></svg>
<div class="a" style="left:1277px;top:237px;width:163px;height:3px;background:#2a4a4a;"></div>
<div class="a" style="left:1277px;top:240px;width:42px;height:42px;background:#202020;"></div>
<div class="a" style="left:1279px;top:242px;width:38px;height:38px;background:#f4f4f4;border-style:solid;border-width:2px;border-color:#ffffff #707070 #707070 #ffffff;"></div>
<div class="a" style="left:1283px;top:246px;width:30px;height:30px;background:transparent;border:1px solid #000;"></div>
<svg class="a" style="left:1279px;top:242px" width="38" height="38"><rect x="12.5" y="13.5" width="14" height="13.5" fill="none" stroke="#000" stroke-width="1"/><circle cx="19" cy="19.7" r="5.8" fill="#000"/><path d="M21 17 L29.5 8.5" stroke="#000" stroke-width="2.2"/><path d="M31.8 6.2 L24.5 7.5 L30.5 13.5 Z" fill="#000"/></svg>
<div class="a" style="left:1317px;top:240px;width:42px;height:42px;background:#202020;"></div>
<div class="a" style="left:1319px;top:242px;width:38px;height:38px;background:#f4f4f4;border-style:solid;border-width:2px;border-color:#ffffff #707070 #707070 #ffffff;"></div>
<div class="a" style="left:1323px;top:246px;width:30px;height:30px;background:transparent;border:1px solid #000;"></div>
<svg class="a" style="left:1319px;top:242px" width="38" height="38"><rect x="5" y="5" width="28" height="27.5" fill="#000"/><rect x="18.3" y="8.4" width="11.4" height="11.4" fill="none" stroke="#e02020" stroke-width="2"/><rect x="8.3" y="24" width="5.4" height="5.8" fill="none" stroke="#00f" stroke-width="2"/><path d="M16.8 8 L8.5 22 M30 20.8 L15 29.5" stroke="#fff" stroke-width="0.9"/></svg>
<div class="a" style="left:1357px;top:240px;width:42px;height:42px;background:#202020;"></div>
<div class="a" style="left:1359px;top:242px;width:38px;height:38px;background:#f4f4f4;border-style:solid;border-width:2px;border-color:#ffffff #707070 #707070 #ffffff;"></div>
<div class="a" style="left:1363px;top:246px;width:30px;height:30px;background:transparent;border:1px solid #000;"></div>
<svg class="a" style="left:1359px;top:242px" width="38" height="38"><rect x="7" y="18.6" width="25" height="4" fill="#000"/><path d="M7.5 15 V19 M9.5 16 V19 M11.5 15 V19 M13.5 16 V19 M15.5 14.5 V19 M17.5 16 V19 M19.5 15 V19 M21.5 16 V19 M23.5 14.5 V19 M25.5 16 V19 M27.5 15 V19 M29.5 16 V19 M31.5 15 V19" stroke="#000" stroke-width="1"/></svg>
<div class="a" style="left:1397px;top:240px;width:42px;height:42px;background:#202020;"></div>
<div class="a" style="left:1399px;top:242px;width:38px;height:38px;background:#f4f4f4;border-style:solid;border-width:2px;border-color:#ffffff #707070 #707070 #ffffff;"></div>
<div class="a" style="left:1403px;top:246px;width:30px;height:30px;background:transparent;border:1px solid #000;"></div>
<svg class="a" style="left:1399px;top:242px" width="38" height="38"><rect x="8.5" y="8.5" width="21.5" height="22" fill="none" stroke="#000" stroke-width="1" stroke-dasharray="2 1.5"/><path d="M15.5 13 H22.5 L26.2 16.7 V23.2 L22.5 26.9 H15.5 L11.8 23.2 V16.7 Z" fill="#000"/></svg>
<div class="a" style="left:1277px;top:280px;width:42px;height:42px;background:#202020;"></div>
<div class="a" style="left:1279px;top:282px;width:38px;height:38px;background:#c8c8c8;border-style:solid;border-width:2px;border-color:#f0f0f0 #606060 #606060 #f0f0f0;"></div>
<div class="a" style="left:1283px;top:286px;width:30px;height:30px;background:transparent;border:1px solid #000;"></div>
<svg class="a" style="left:1279px;top:282px" width="38" height="38"><path d="M11.2 10.8 V26.3 H26.2" stroke="#00f" stroke-width="3.5" fill="none"/><circle cx="11.2" cy="10.8" r="4.5" fill="#00f"/><circle cx="11.2" cy="26.3" r="4.5" fill="#00f"/><circle cx="26.2" cy="26.3" r="4.5" fill="#00f"/><circle cx="26.2" cy="11.3" r="4.5" fill="#f00"/></svg>
<div class="a" style="left:1317px;top:280px;width:42px;height:42px;background:#202020;"></div>
<div class="a" style="left:1319px;top:282px;width:38px;height:38px;background:#c8c8c8;border-style:solid;border-width:2px;border-color:#f0f0f0 #606060 #606060 #f0f0f0;"></div>
<div class="a" style="left:1323px;top:286px;width:30px;height:30px;background:transparent;border:1px solid #000;"></div>
<svg class="a" style="left:1319px;top:282px" width="38" height="38"><path d="M11.5 12.5 L26.5 26.5 M26.5 12.5 L11.5 26.5" stroke="#000" stroke-width="2"/><rect x="15.5" y="15.8" width="7" height="7" fill="#00c"/></svg>
<div class="a" style="left:1357px;top:280px;width:42px;height:42px;background:#202020;"></div>
<div class="a" style="left:1359px;top:282px;width:38px;height:38px;background:#c8c8c8;border-style:solid;border-width:2px;border-color:#f0f0f0 #606060 #606060 #f0f0f0;"></div>
<div class="a" style="left:1363px;top:286px;width:30px;height:30px;background:transparent;border:1px solid #000;"></div>
<svg class="a" style="left:1359px;top:282px" width="38" height="38"><circle cx="11.2" cy="26.3" r="3.5" fill="none" stroke="#00f" stroke-width="2"/><circle cx="26.2" cy="11.3" r="4.5" fill="#f00"/><path d="M15.5 22.5 L21.5 16.5" stroke="#000" stroke-width="1.1"/><path d="M22.8 15.2 L18.8 16.2 L21.8 19.2 Z" fill="#000"/></svg>
<div class="a" style="left:1397px;top:280px;width:42px;height:42px;background:#202020;"></div>
<div class="a" style="left:1399px;top:282px;width:38px;height:38px;background:#c8c8c8;border-style:solid;border-width:2px;border-color:#f0f0f0 #606060 #606060 #f0f0f0;"></div>
<div class="a" style="left:1403px;top:286px;width:30px;height:30px;background:transparent;border:1px solid #000;"></div>
<svg class="a" style="left:1399px;top:282px" width="38" height="38"><circle cx="11.2" cy="26.3" r="4.5" fill="#00f"/><circle cx="26.2" cy="11.3" r="4.5" fill="#f00"/><path d="M15.5 22.5 L21.5 16.5" stroke="#000" stroke-width="1.1"/><path d="M22.8 15.2 L18.8 16.2 L21.8 19.2 Z" fill="#000"/></svg>
<div class="a" style="left:1277px;top:320px;width:42px;height:42px;background:#202020;"></div>
<div class="a" style="left:1279px;top:322px;width:38px;height:38px;background:#c8c8c8;border-style:solid;border-width:2px;border-color:#f0f0f0 #606060 #606060 #f0f0f0;"></div>
<div class="a" style="left:1283px;top:326px;width:30px;height:30px;background:transparent;border:1px solid #000;"></div>
<svg class="a" style="left:1279px;top:322px" width="38" height="38"><path d="M9 25 L25 10" stroke="#e00" stroke-width="2.5"/><path d="M8 28 H28" stroke="#00c" stroke-width="3"/><path d="M17 23 L21 20 M18 20 H21 V23" stroke="#000" stroke-width="1" fill="none"/></svg>
<div class="a" style="left:1317px;top:320px;width:42px;height:42px;background:#202020;"></div>
<div class="a" style="left:1319px;top:322px;width:38px;height:38px;background:#c8c8c8;border-style:solid;border-width:2px;border-color:#f0f0f0 #606060 #606060 #f0f0f0;"></div>
<div class="a" style="left:1323px;top:326px;width:30px;height:30px;background:transparent;border:1px solid #000;"></div>
<svg class="a" style="left:1319px;top:322px" width="38" height="38"><path d="M9 28 L17 20" stroke="#00f" stroke-width="3"/><path d="M17 20 L27 10" stroke="#e00" stroke-width="3"/><path d="M21 26 L26 21 M23 21 H26 V24" stroke="#000" stroke-width="1" fill="none"/></svg>
<div class="a" style="left:1357px;top:320px;width:42px;height:42px;background:#202020;"></div>
<div class="a" style="left:1359px;top:322px;width:38px;height:38px;background:#c8c8c8;border-style:solid;border-width:2px;border-color:#f0f0f0 #606060 #606060 #f0f0f0;"></div>
<div class="a" style="left:1363px;top:326px;width:30px;height:30px;background:transparent;border:1px solid #000;"></div>
<svg class="a" style="left:1359px;top:322px" width="38" height="38"><path d="M16 11 Q24 12 23 19 Q21 25 15 25" stroke="#000" stroke-width="1.8" fill="none"/><path d="M13 25 L17 22 L17 28Z" fill="#000"/></svg>
<div class="a" style="left:1397px;top:320px;width:42px;height:42px;background:#202020;"></div>
<div class="a" style="left:1399px;top:322px;width:38px;height:38px;background:#c8c8c8;border-style:solid;border-width:2px;border-color:#f0f0f0 #606060 #606060 #f0f0f0;"></div>
<div class="a" style="left:1403px;top:326px;width:30px;height:30px;background:transparent;border:1px solid #000;"></div>
<svg class="a" style="left:1399px;top:322px" width="38" height="38"><path d="M8 11 H16 V25 M8 18 H15 M9 22 H15" stroke="#00f" stroke-width="2" fill="none"/><path d="M18 8 V30" stroke="#000" stroke-width="1"/><path d="M28 11 H21 V26 M21 18 H27" stroke="#e00" stroke-width="2" fill="none"/></svg>
<div class="a" style="left:1277px;top:360px;width:42px;height:42px;background:#202020;"></div>
<div class="a" style="left:1279px;top:362px;width:38px;height:38px;background:#c8c8c8;border-style:solid;border-width:2px;border-color:#f0f0f0 #606060 #606060 #f0f0f0;"></div>
<div class="a" style="left:1283px;top:366px;width:30px;height:30px;background:transparent;border:1px solid #000;"></div>
<svg class="a" style="left:1279px;top:362px" width="38" height="38"><rect x="20" y="7" width="10" height="10" fill="#e00"/><circle cx="25" cy="12" r="3" fill="#ddd"/><rect x="7" y="20" width="10" height="10" fill="none" stroke="#00c" stroke-width="1.2"/><circle cx="12" cy="25" r="3" fill="#00f"/><path d="M16 20 L20 16" stroke="#000"/></svg>
<div class="a" style="left:1317px;top:360px;width:42px;height:42px;background:#202020;"></div>
<div class="a" style="left:1319px;top:362px;width:38px;height:38px;background:#c8c8c8;border-style:solid;border-width:2px;border-color:#f0f0f0 #606060 #606060 #f0f0f0;"></div>
<div class="a" style="left:1323px;top:366px;width:30px;height:30px;background:transparent;border:1px solid #000;"></div>
<svg class="a" style="left:1319px;top:362px" width="38" height="38"><path d="M8 18 H16" stroke="#e00" stroke-width="2.5"/><path d="M16 18 H21" stroke="#00f" stroke-width="2.5"/><path d="M21 18 H29" stroke="#e00" stroke-width="2.5"/></svg>
<div class="a" style="left:1357px;top:360px;width:42px;height:42px;background:#202020;"></div>
<div class="a" style="left:1359px;top:362px;width:38px;height:38px;background:#c8c8c8;border-style:solid;border-width:2px;border-color:#f0f0f0 #606060 #606060 #f0f0f0;"></div>
<div class="a" style="left:1363px;top:366px;width:30px;height:30px;background:transparent;border:1px solid #000;"></div>
<svg class="a" style="left:1359px;top:362px" width="38" height="38"><path d="M8 7 V30 M29 7 V30" stroke="#000" stroke-width="1"/><path d="M9 18 H28" stroke="#00f" stroke-width="1"/><rect x="15" y="13" width="8" height="9" fill="#fff" stroke="#00f"/><text x="17" y="21" font-size="7" fill="#00f" font-family="Liberation Sans">4</text></svg>
<div class="a" style="left:1397px;top:360px;width:42px;height:42px;background:#202020;"></div>
<div class="a" style="left:1399px;top:362px;width:38px;height:38px;background:#c8c8c8;border-style:solid;border-width:2px;border-color:#f0f0f0 #606060 #606060 #f0f0f0;"></div>
<div class="a" style="left:1403px;top:366px;width:30px;height:30px;background:transparent;border:1px solid #000;"></div>
<svg class="a" style="left:1399px;top:362px" width="38" height="38"><rect x="8" y="9" width="14" height="13" fill="#00f"/><circle cx="16" cy="14" r="3.5" fill="#ddd"/><rect x="16" y="16" width="14" height="13" fill="#00f"/><circle cx="23" cy="23" r="4" fill="#ddd"/></svg>
<div class="a" style="left:1277px;top:400px;width:42px;height:42px;background:#202020;"></div>
<div class="a" style="left:1279px;top:402px;width:38px;height:38px;background:#c8c8c8;border-style:solid;border-width:2px;border-color:#f0f0f0 #606060 #606060 #f0f0f0;"></div>
<div class="a" style="left:1283px;top:406px;width:30px;height:30px;background:transparent;border:1px solid #000;"></div>
<svg class="a" style="left:1279px;top:402px" width="38" height="38"><path d="M8 26 L18 13 L28 26Z" fill="none" stroke="#e00" stroke-width="2"/><path d="M8 26 H28" stroke="#00f" stroke-width="3"/><path d="M18 23 V18 M16 20 L18 18 L20 20" stroke="#000" fill="none"/></svg>
<div class="a" style="left:1317px;top:400px;width:42px;height:42px;background:#202020;"></div>
<div class="a" style="left:1319px;top:402px;width:38px;height:38px;background:#c8c8c8;border-style:solid;border-width:2px;border-color:#f0f0f0 #606060 #606060 #f0f0f0;"></div>
<div class="a" style="left:1323px;top:406px;width:30px;height:30px;background:transparent;border:1px solid #000;"></div>
<svg class="a" style="left:1319px;top:402px" width="38" height="38"><path d="M7 29 L18 6 L29 29" fill="none" stroke="#e00" stroke-width="2"/><path d="M8 31 L18 22 L28 31" fill="none" stroke="#00f" stroke-width="2.5"/><path d="M18 19 V12 M16 14 L18 12 L20 14" stroke="#000" fill="none"/></svg>
<div class="a" style="left:1357px;top:400px;width:42px;height:42px;background:#202020;"></div>
<div class="a" style="left:1359px;top:402px;width:38px;height:38px;background:#c8c8c8;border-style:solid;border-width:2px;border-color:#f0f0f0 #606060 #606060 #f0f0f0;"></div>
<div class="a" style="left:1363px;top:406px;width:30px;height:30px;background:transparent;border:1px solid #000;"></div>
<svg class="a" style="left:1359px;top:402px" width="38" height="38"><path d="M8 29 L14 11 H23 L29 29" fill="none" stroke="#e00" stroke-width="3"/><path d="M6 29 H31" stroke="#00f" stroke-width="3"/><path d="M18 20 V14 M16 16 L18 14 L20 16" stroke="#000" fill="none"/></svg>
<div class="a" style="left:1397px;top:400px;width:42px;height:42px;background:#202020;"></div>
<div class="a" style="left:1399px;top:402px;width:38px;height:38px;background:#c8c8c8;border-style:solid;border-width:2px;border-color:#f0f0f0 #606060 #606060 #f0f0f0;"></div>
<div class="a" style="left:1403px;top:406px;width:30px;height:30px;background:transparent;border:1px solid #000;"></div>
<svg class="a" style="left:1399px;top:402px" width="38" height="38"><path d="M8 29 L14 11 H23 L29 29" fill="none" stroke="#e00" stroke-width="3"/><path d="M5 24 H32" stroke="#00f" stroke-width="2.5"/><path d="M6 22 L10 26 M6 26 L10 22 M27 22 L31 26 M27 26 L31 22" stroke="#000"/><path d="M18 20 V14 M16 16 L18 14 L20 16" stroke="#000" fill="none"/></svg>
<div class="a" style="left:1277px;top:440px;width:42px;height:42px;background:#202020;"></div>
<div class="a" style="left:1279px;top:442px;width:38px;height:38px;background:#f9c04c;border-style:solid;border-width:2px;border-color:#ffe0a0 #806020 #806020 #ffe0a0;"></div>
<div class="a" style="left:1283px;top:446px;width:30px;height:30px;background:transparent;border:1px solid #000;"></div>
<svg class="a" style="left:1279px;top:442px" width="38" height="38"><path d="M14 9 L14 27 L18 23 L21 29 L23 28 L20 22 L25 22Z" fill="#000"/></svg>
<div class="a" style="left:1317px;top:440px;width:42px;height:42px;background:#202020;"></div>
<div class="a" style="left:1319px;top:442px;width:38px;height:38px;background:#f9c04c;border-style:solid;border-width:2px;border-color:#ffe0a0 #806020 #806020 #ffe0a0;"></div>
<div class="a" style="left:1323px;top:446px;width:30px;height:30px;background:transparent;border:1px solid #000;"></div>
<svg class="a" style="left:1319px;top:442px" width="38" height="38"><rect x="9" y="9" width="19" height="19" fill="none" stroke="#e00" stroke-width="2"/><path d="M15 11 L15 28 L18 25 L21 30 L23 29 L20 24 L25 24Z" fill="#000"/></svg>
<div class="a" style="left:1357px;top:440px;width:42px;height:42px;background:#202020;"></div>
<div class="a" style="left:1359px;top:442px;width:38px;height:38px;background:#f9c04c;border-style:solid;border-width:2px;border-color:#ffe0a0 #806020 #806020 #ffe0a0;"></div>
<div class="a" style="left:1363px;top:446px;width:30px;height:30px;background:transparent;border:1px solid #000;"></div>
<svg class="a" style="left:1359px;top:442px" width="38" height="38"><path d="M14 8 H27 V29 H14 L9 24 V13Z" fill="none" stroke="#e00" stroke-width="2"/><path d="M16 11 L16 28 L19 25 L22 30 L24 29 L21 24 L26 24Z" fill="#000"/></svg>
<div class="a" style="left:1397px;top:440px;width:42px;height:42px;background:#202020;"></div>
<div class="a" style="left:1399px;top:442px;width:38px;height:38px;background:#f9c04c;border-style:solid;border-width:2px;border-color:#ffe0a0 #806020 #806020 #ffe0a0;"></div>
<div class="a" style="left:1403px;top:446px;width:30px;height:30px;background:transparent;border:1px solid #000;"></div>
<svg class="a" style="left:1399px;top:442px" width="38" height="38"><path d="M10 8 V18 H16 V27 H10 M16 18 H24 V8" stroke="#000" fill="none"/><circle cx="11" cy="20" r="2.5" fill="#e00"/><circle cx="10" cy="27" r="2.5" fill="#2c2"/><circle cx="26" cy="8" r="2.5" fill="#2c2"/><path d="M20 16 L20 30 L23 27 L25 31 L27 30 L25 26 L29 26Z" fill="#000"/></svg>
<div class="a" style="left:1276px;top:482px;width:164px;height:267px;background:#4f8080;"></div>
<div class="a" style="left:1438px;top:485px;width:2px;height:263px;background:#a8e8e0;"></div>
<div class="a" style="left:1278px;top:485px;width:160px;height:263px;background:#000;"></div>
<div class="a" style="left:1278px;top:560px;width:159px;height:114px;background:transparent;border:1px solid #3c8a28;"></div>
<div class="a" style="left:1334px;top:606px;width:39px;height:25px;background:#f00;"></div>
<div class="a" style="left:1334px;top:607px;width:30px;height:20px;background:transparent;border:2px solid #7fd0e0;"></div>
<div class="a" style="left:1334px;top:607px;width:6px;height:6px;background:#40e0f0;"></div>
<div class="a" style="left:1277px;top:748px;width:163px;height:48px;background:#5ccbb0;"></div>
<div class="a" style="left:1277px;top:748px;width:163px;height:2px;background:#a8f0e0;"></div>
<div class="a mono" style="left:1281px;top:756px;font-size:14px;white-space:nowrap;letter-spacing:0.45px">X = 3.989253"</div>
<div class="a mono" style="left:1281px;top:772px;font-size:14px;white-space:nowrap;letter-spacing:0.45px">Y = 3.244360"</div>
<div class="a" style="left:0px;top:796px;width:1440px;height:33px;background:#fffcd0;"></div>
<div class="a" style="left:0px;top:794px;width:1440px;height:2px;background:#000;"></div>
<div class="a" style="left:1px;top:796px;width:31px;height:32px;background:#fffcd0;border-style:solid;border-width:1px;border-color:#ffffff #404040 #404040 #ffffff;"></div>
<div class="a" style="left:4px;top:799px;width:25px;height:26px;background:transparent;border:1px solid #b8b890;"></div>
<div class="a" style="left:7px;top:801px;width:21px;height:21px;background:transparent;border:1.5px solid #000;"></div>
<div class="a" style="left:33px;top:796px;width:31px;height:32px;background:#fffcd0;border-style:solid;border-width:1px;border-color:#ffffff #404040 #404040 #ffffff;"></div>
<div class="a" style="left:36px;top:799px;width:25px;height:26px;background:transparent;border:1px solid #b8b890;"></div>
<div class="a" style="left:39px;top:801px;width:21px;height:21px;background:transparent;border:1.5px solid #000;"></div>
<svg class="a" style="left:1px;top:796px" width="31" height="32"><path d="M11 11 V24.5 H24" fill="none" stroke="#000" stroke-width="1.2"/><path d="M12.5 12 L22.5 22 M12.5 12 V16 M12.5 12 H16.5 M22.5 22 V18 M22.5 22 H18.5" stroke="#000" stroke-width="1.3" fill="none"/></svg>
<svg class="a" style="left:33px;top:796px" width="31" height="32"><path d="M9 24.5 L22 12 M9 24.5 H22 M12.5 13 V17 M11.5 17 H13.5" fill="none" stroke="#000" stroke-width="1.3"/><path d="M15 24.5 Q15 21.5 18 21" fill="none" stroke="#000" stroke-width="1"/><text x="17.5" y="23" font-size="5.5" font-weight="bold" font-family="Liberation Sans">dx</text></svg>
<div class="a" style="left:66px;top:796px;width:29px;height:32px;background:#5ccbb0;"></div>
<div class="a" style="left:68px;top:798px;width:25px;height:28px;background:#fffcd0;border-style:solid;border-width:2px;border-color:#fffff0 #a09c80 #a09c80 #fffff0;"></div>
<div class="a" style="left:72px;top:803px;width:17px;height:17px;background:transparent;border:1.5px solid #000;"></div>
<svg class="a" style="left:66px;top:796px" width="29" height="32"><path d="M9 22 V13 L12 10 H20 V22Z M14.5 10 V22 M9 16 H20" stroke="#000" stroke-width="1.3" fill="none"/></svg>
<div class="a mono" style="left:98px;top:806px;font-size:13px;white-space:nowrap;letter-spacing:-0.2px">X Y :</div>
<div class="a" style="left:143px;top:796px;width:173px;height:32px;background:#fffcd0;border:1px solid #707060;"></div>
<div class="a" style="left:144px;top:797px;width:171px;height:30px;background:transparent;border:2px solid #fffff0;"></div>
<div class="a" style="left:146px;top:799px;width:167px;height:26px;background:transparent;border:2px solid #c4c09c;"></div>
<svg class="a" style="left:148px;top:802px" width="6" height="16"><path d="M1 1 H5 M3 1 V15 M1 15 H5" stroke="#000" stroke-width="0.8" stroke-dasharray="1 1"/></svg>
<div class="a" style="left:317px;top:797px;width:30px;height:31px;background:#5ccbb0;"></div>
<div class="a" style="left:319px;top:799px;width:26px;height:27px;background:#fffcd0;border-style:solid;border-width:2px;border-color:#fff #4f8585 #4f8585 #fff;"></div>
<div class="a" style="left:323px;top:803px;width:18px;height:19px;background:transparent;border:1px solid #000;"></div>
<svg class="a" style="left:317px;top:797px" width="30" height="31"><path d="M15 9 V19" stroke="#000" stroke-width="2.5"/><rect x="13.7" y="21" width="2.6" height="2.6" fill="#000"/></svg>
<div class="a" style="left:346px;top:796px;width:2px;height:32px;background:#203030;"></div>
<div class="a mono" style="left:352px;top:805px;font-size:13px;white-space:nowrap;letter-spacing:-0.8px">&lt;M1&gt; - Select first area corner</div>
<div class="a" style="left:1359px;top:795px;width:81px;height:35px;background:#000;"></div>
<div class="a" style="left:1361px;top:797px;width:79px;height:31px;background:#5ccbb0;"></div>
<div class="a" style="left:1366px;top:799px;width:70px;height:27px;background:#5ccbb0;border-style:solid;border-width:2px;border-color:#b0ffe8 #2f7060 #2f7060 #b0ffe8;"></div>
<div class="a serif" style="left:1373px;top:804px;font-family:'Liberation Serif',serif;font-weight:bold;font-size:15.5px;letter-spacing:1.2px;white-space:nowrap">Inch</div>
<div class="a" style="left:1417px;top:809px;width:12px;height:7px;background:#5ccbb0;border-style:solid;border-width:2px;border-color:#c0fff0 #2f7060 #2f7060 #c0fff0;"></div>
<div class="a" style="left:0px;top:829px;width:1440px;height:3px;background:#5a8a8a;"></div>
<div class="a" style="left:0px;top:829px;width:4px;height:29px;background:#5a8a8a;"></div>
<div class="a" style="left:4px;top:832px;width:1432px;height:23px;background:#aefafa;border-style:solid;border-width:2px;border-color:#e0ffff #5a8a8a #5a8a8a #e0ffff;"></div>
<div class="a" style="left:1436px;top:830px;width:1px;height:28px;background:#000;"></div>
<div class="a" style="left:1437px;top:830px;width:3px;height:28px;background:#fffcd0;"></div>
<div class="a" style="left:0px;top:855px;width:1440px;height:3px;background:#5a8a8a;"></div>
<div class="a" style="left:0px;top:857px;width:1440px;height:1px;background:#000;"></div>
<div class="a mono" style="left:432px;top:838px;font-size:12px;white-space:nowrap;letter-spacing:-0.2px">cs,#4170,Line,XS=2.6448039,YS=1.1600182,XE=2.6339405,YE=1.153333,r6,POS,Ang=-31.61</div>
<div class="a" style="left:0px;top:858px;width:1440px;height:17px;background:#fffcd0;"></div>
<div class="a" style="left:0px;top:874px;width:1440px;height:2px;background:#c8c8c0;"></div>
<div class="a" style="left:269px;top:56px;width:448px;height:334px;background:#d4d0c8;border-style:solid;border-width:1px;border-color:#d4d0c8 #404040 #404040 #d4d0c8;"></div>
<div class="a" style="left:270px;top:57px;width:446px;height:332px;background:transparent;border-style:solid;border-width:1px;border-color:#ffffff #808080 #808080 #ffffff;"></div>
<div class="a" style="left:273px;top:60px;width:440px;height:18px;background:linear-gradient(90deg,#808080 0%,#a0a0a0 50%,#c0c0c0 100%);"></div>
<div class="a" style="left:275px;top:62px;width:16px;height:15px;background:linear-gradient(90deg,#d0d0d0,#fff 40%);border-bottom:2px solid #111;border-right:1px solid #222"></div>
<div class="a" style="left:275px;top:62px;width:16px;height:2px;background:#0a1a70;"></div>
<svg class="a" style="left:277px;top:65px" width="12" height="10"><path d="M2 1.5 L10 8.5 M10 1.5 L2 8.5" stroke="#b0b800" stroke-width="2.2"/></svg>
<div class="a " style="left:293px;top:62px;font-size:12px;font-weight:bold;color:#d4d0c8;white-space:nowrap;line-height:14px">Popview - 1</div>
<div class="a" style="left:695px;top:62px;width:16px;height:14px;background:#d4d0c8;border-style:solid;border-width:1px;border-color:#fff #404040 #404040 #fff;"></div>
<svg class="a" style="left:695px;top:62px" width="16" height="14"><path d="M4 3 L11 10 M11 3 L4 10" stroke="#000" stroke-width="1.8"/></svg>
<div class="a" style="left:273px;top:79px;width:440px;height:307px;background:#000;"></div>
<div class="a" style="left:274px;top:80px;width:438px;height:305px;background:#5ccbb0;"></div>
<div class="a" style="left:273px;top:80px;width:403px;height:277px;background:transparent;border-style:solid;border-width:3px;border-color:#3f7070 #c8fff0 #c8fff0 #3f7070;"></div>
<div class="a" style="left:276px;top:83px;width:397px;height:271px;background:#000;"></div>
<svg class="a" style="left:277px;top:84px" width="395" height="269" viewBox="277 84 395 269"><rect x="270" y="80" width="410" height="280" fill="#449900"/><rect x="440" y="80" width="39" height="280" fill="#c09800"/><path d="M294 360 V318 A146 146 0 0 1 440 171.5 H680" fill="none" stroke="#000" stroke-width="19.5"/><path d="M335 360 V320 A105 105 0 0 1 440 214 H680" fill="none" stroke="#000" stroke-width="19.5"/><rect x="440" y="161.5" width="39" height="20" fill="#ff0000"/><rect x="440" y="204" width="39" height="19.5" fill="#ff0000"/><rect x="479" y="160" width="200" height="21" fill="#000"/><rect x="479" y="204" width="200" height="21" fill="#000"/><rect x="503" y="140" width="29" height="29" fill="#c09800"/><rect x="632" y="140" width="29" height="29" fill="#c09800"/><rect x="503" y="176" width="30" height="30" fill="#e82000"/><rect x="504.5" y="177.5" width="27" height="27" fill="#c09800"/><rect x="549" y="176" width="31" height="30" fill="#e82000"/><rect x="550.5" y="177.5" width="28" height="27" fill="#c09800"/><rect x="585" y="176" width="31" height="30" fill="#e82000"/><rect x="586.5" y="177.5" width="28" height="27" fill="#c09800"/><rect x="632" y="176" width="30" height="30" fill="#e82000"/><rect x="633.5" y="177.5" width="27" height="27" fill="#c09800"/></svg>
<div class="a" style="left:676px;top:80px;width:36px;height:277px;background:#5ccbb0;"></div>
<div class="a" style="left:676px;top:81px;width:36px;height:36px;background:#000;"></div>
<div class="a" style="left:677px;top:82px;width:34px;height:34px;background:#5ccbb0;"></div>
<div class="a" style="left:678px;top:83px;width:32px;height:32px;background:#9bd9d9;border-style:solid;border-width:2px;border-color:#d8fff8 #3f8080 #3f8080 #d8fff8;"></div>
<div class="a" style="left:684px;top:88px;width:21px;height:21px;background:transparent;border:1px solid #000;"></div>
<svg class="a" style="left:676px;top:81px" width="36" height="35"><rect x="11.2" y="13.2" width="7.6" height="8.5" fill="none" stroke="#000" stroke-width="2"/><rect x="22" y="9.8" width="4.3" height="4.3" fill="none" stroke="#000" stroke-width="1"/><path d="M24.2 14.5 V17.5 H19 M13.5 17.5 H17.5 M15.5 15.2 L13.3 17.5 L15.5 19.8" fill="none" stroke="#000" stroke-width="1"/></svg>
<div class="a" style="left:676px;top:116px;width:36px;height:36px;background:#000;"></div>
<div class="a" style="left:677px;top:117px;width:34px;height:34px;background:#5ccbb0;"></div>
<div class="a" style="left:678px;top:118px;width:32px;height:32px;background:#9bd9d9;border-style:solid;border-width:2px;border-color:#d8fff8 #3f8080 #3f8080 #d8fff8;"></div>
<div class="a" style="left:684px;top:123px;width:21px;height:21px;background:transparent;border:1px solid #000;"></div>
<svg class="a" style="left:676px;top:116px" width="36" height="35"><path d="M13 16 V26 H24.5 V16" fill="none" stroke="#000" stroke-width="2"/><rect x="11.5" y="14.5" width="14.5" height="13" fill="none" stroke="#000" stroke-width="1"/><path d="M18.5 9 L13.5 13.5 H16 V20 H21 V13.5 H23.5 Z" fill="#000"/></svg>
<div class="a" style="left:676px;top:151px;width:36px;height:36px;background:#000;"></div>
<div class="a" style="left:677px;top:152px;width:34px;height:34px;background:#5ccbb0;"></div>
<div class="a" style="left:678px;top:153px;width:32px;height:32px;background:#9bd9d9;border-style:solid;border-width:2px;border-color:#d8fff8 #3f8080 #3f8080 #d8fff8;"></div>
<div class="a" style="left:684px;top:158px;width:21px;height:21px;background:transparent;border:1px solid #000;"></div>
<svg class="a" style="left:676px;top:151px" width="36" height="35"><rect x="12.5" y="10.5" width="12" height="10" fill="none" stroke="#000" stroke-width="2"/><rect x="11" y="9" width="15" height="13" fill="none" stroke="#000" stroke-width="1"/><path d="M18.5 27 L13.5 22.5 H16 V16 H21 V22.5 H23.5 Z" fill="#000"/></svg>
<div class="a" style="left:676px;top:186px;width:36px;height:36px;background:#000;"></div>
<div class="a" style="left:677px;top:187px;width:34px;height:34px;background:#5ccbb0;"></div>
<div class="a" style="left:678px;top:188px;width:32px;height:32px;background:#9bd9d9;border-style:solid;border-width:2px;border-color:#d8fff8 #3f8080 #3f8080 #d8fff8;"></div>
<div class="a" style="left:684px;top:193px;width:21px;height:21px;background:transparent;border:1px solid #000;"></div>
<svg class="a" style="left:676px;top:186px" width="36" height="35"><path d="M17 11.5 H25 V24.5 H17" fill="none" stroke="#000" stroke-width="2"/><rect x="15" y="10" width="11.5" height="16" fill="none" stroke="#000" stroke-width="1"/><path d="M10 18 L14.5 13 V15.5 H21 V20.5 H14.5 V23 Z" fill="#000"/></svg>
<div class="a" style="left:676px;top:221px;width:36px;height:36px;background:#000;"></div>
<div class="a" style="left:677px;top:222px;width:34px;height:34px;background:#5ccbb0;"></div>
<div class="a" style="left:678px;top:223px;width:32px;height:32px;background:#9bd9d9;border-style:solid;border-width:2px;border-color:#d8fff8 #3f8080 #3f8080 #d8fff8;"></div>
<div class="a" style="left:684px;top:228px;width:21px;height:21px;background:transparent;border:1px solid #000;"></div>
<svg class="a" style="left:676px;top:221px" width="36" height="35"><path d="M20 11.5 H12 V24.5 H20" fill="none" stroke="#000" stroke-width="2"/><rect x="10.5" y="10" width="11.5" height="16" fill="none" stroke="#000" stroke-width="1"/><path d="M27 18 L22.5 13 V15.5 H16 V20.5 H22.5 V23 Z" fill="#000"/></svg>
<div class="a" style="left:676px;top:256px;width:36px;height:36px;background:#000;"></div>
<div class="a" style="left:677px;top:257px;width:34px;height:34px;background:#5ccbb0;"></div>
<div class="a" style="left:678px;top:258px;width:32px;height:32px;background:#9bd9d9;border-style:solid;border-width:2px;border-color:#d8fff8 #3f8080 #3f8080 #d8fff8;"></div>
<div class="a" style="left:684px;top:263px;width:21px;height:21px;background:transparent;border:1px solid #000;"></div>
<svg class="a" style="left:676px;top:256px" width="36" height="35"><rect x="16.3" y="15.2" width="4.4" height="4.6" fill="none" stroke="#000" stroke-width="2"/><path d="M13.5 9 H23.5 L18.5 13 Z M13.5 26.2 H23.5 L18.5 22 Z M9.5 12.5 V22.5 L14 17.5 Z M27.5 12.5 V22.5 L23 17.5 Z" fill="#000"/><path d="M11.5 8.5 H25.5 M11.5 26.5 H25.5 M9 10.5 V24.5 M28 10.5 V24.5" stroke="#000" stroke-width="1"/></svg>
<div class="a" style="left:676px;top:291px;width:36px;height:36px;background:#000;"></div>
<div class="a" style="left:677px;top:292px;width:34px;height:34px;background:#5ccbb0;"></div>
<div class="a" style="left:678px;top:293px;width:32px;height:32px;background:#9bd9d9;border-style:solid;border-width:2px;border-color:#d8fff8 #3f8080 #3f8080 #d8fff8;"></div>
<div class="a" style="left:684px;top:298px;width:21px;height:21px;background:transparent;border:1px solid #000;"></div>
<svg class="a" style="left:676px;top:291px" width="36" height="35"><rect x="15.8" y="14.8" width="5.4" height="5.4" fill="none" stroke="#000" stroke-width="1.8"/><path d="M18.5 9 L14.5 13 H22.5 Z M18.5 26 L14.5 22 H22.5 Z M10 17.5 L14 13.5 V21.5 Z M27 17.5 L23 13.5 V21.5 Z" fill="#000"/></svg>
<div class="a" style="left:676px;top:81px;width:1px;height:245px;background:#000;"></div>
<div class="a" style="left:711px;top:81px;width:1px;height:273px;background:#000;"></div>
<div class="a" style="left:273px;top:357px;width:440px;height:1px;background:#000;"></div>
<div class="a" style="left:274px;top:358px;width:438px;height:28px;background:#5ccbb0;"></div>
<div class="a" style="left:275px;top:361px;width:436px;height:22px;background:#9bd9d9;border-style:solid;border-width:2px;border-color:#e0ffff #3f7070 #3f7070 #e0ffff;"></div>
<div class="a mono" style="left:275px;top:364px;width:436px;text-align:center;font-size:14px;letter-spacing:0.5px;line-height:16px">Close</div>
<div class="a" style="left:351px;top:463px;width:413px;height:303px;background:#d4d0c8;border-style:solid;border-width:1px;border-color:#d4d0c8 #404040 #404040 #d4d0c8;"></div>
<div class="a" style="left:352px;top:464px;width:411px;height:301px;background:transparent;border-style:solid;border-width:1px;border-color:#ffffff #808080 #808080 #ffffff;"></div>
<div class="a" style="left:355px;top:467px;width:405px;height:18px;background:linear-gradient(90deg,#0a246a 0%,#3a6ea5 45%,#a6caf0 100%);"></div>
<div class="a" style="left:357px;top:469px;width:16px;height:15px;background:linear-gradient(90deg,#d0d0d0,#fff 40%);border-bottom:2px solid #111;border-right:1px solid #222"></div>
<div class="a" style="left:357px;top:469px;width:16px;height:2px;background:#0a1a70;"></div>
<svg class="a" style="left:359px;top:472px" width="12" height="10"><path d="M2 1.5 L10 8.5 M10 1.5 L2 8.5" stroke="#b0b800" stroke-width="2.2"/></svg>
<div class="a " style="left:375px;top:469px;font-size:12px;font-weight:bold;color:#ffffff;white-space:nowrap;line-height:14px">Popview - 2</div>
<div class="a" style="left:742px;top:469px;width:16px;height:14px;background:#d4d0c8;border-style:solid;border-width:1px;border-color:#fff #404040 #404040 #fff;"></div>
<svg class="a" style="left:742px;top:469px" width="16" height="14"><path d="M4 3 L11 10 M11 3 L4 10" stroke="#000" stroke-width="1.8"/></svg>
<div class="a" style="left:355px;top:486px;width:405px;height:276px;background:#000;"></div>
<div class="a" style="left:356px;top:487px;width:403px;height:274px;background:#5ccbb0;"></div>
<div class="a" style="left:355px;top:486px;width:368px;height:247px;background:transparent;border-style:solid;border-width:3px;border-color:#3f7070 #c8fff0 #c8fff0 #3f7070;"></div>
<div class="a" style="left:358px;top:489px;width:362px;height:241px;background:#000;"></div>
<svg class="a" style="left:359px;top:490px" width="360" height="239" viewBox="359 490 360 239"><rect x="350" y="480" width="380" height="260" fill="#449900"/><rect x="358" y="570" width="362" height="48" fill="#c09800"/><rect x="707" y="570" width="13" height="170" fill="#c09800"/><path d="M506 480 Q499 495 498 522 V740" fill="none" stroke="#000" stroke-width="23"/><path d="M580 478 L558 503 Q548 515 548 532 V740" fill="none" stroke="#000" stroke-width="23"/><rect x="486" y="570" width="23" height="48" fill="#ff0000"/><rect x="536" y="570" width="23" height="48" fill="#ff0000"/><rect x="503" y="641" width="39" height="37" fill="#e82000"/><rect x="504" y="642" width="36" height="35" fill="#c09800"/><rect x="548" y="642" width="36" height="36" fill="#c09800"/><rect x="548" y="642" width="2" height="36" fill="#e82000"/><rect x="503" y="698" width="39" height="40" fill="#e82000"/><rect x="504" y="699" width="36" height="40" fill="#c09800"/><rect x="350" y="680" width="37" height="60" fill="#000"/><rect x="350" y="686" width="30" height="50" fill="#e82000"/><rect x="350" y="687" width="28" height="50" fill="#c09800"/><circle cx="392" cy="711" r="14" fill="none" stroke="#000" stroke-width="6"/><rect x="378" y="688" width="8" height="45" fill="#c09800"/><rect x="378" y="688" width="2" height="45" fill="#e82000"/><rect x="350" y="480" width="32" height="25" fill="#000"/><rect x="350" y="480" width="27" height="20" fill="#e82000"/><rect x="350" y="480" width="24" height="17" fill="#c09800"/></svg>
<div class="a" style="left:723px;top:486px;width:36px;height:247px;background:#5ccbb0;"></div>
<div class="a" style="left:723px;top:487px;width:36px;height:36px;background:#000;"></div>
<div class="a" style="left:724px;top:488px;width:34px;height:34px;background:#5ccbb0;"></div>
<div class="a" style="left:725px;top:489px;width:32px;height:32px;background:#9bd9d9;border-style:solid;border-width:2px;border-color:#d8fff8 #3f8080 #3f8080 #d8fff8;"></div>
<div class="a" style="left:731px;top:494px;width:21px;height:21px;background:transparent;border:1px solid #000;"></div>
<svg class="a" style="left:723px;top:487px" width="36" height="35"><rect x="11.2" y="13.2" width="7.6" height="8.5" fill="none" stroke="#000" stroke-width="2"/><rect x="22" y="9.8" width="4.3" height="4.3" fill="none" stroke="#000" stroke-width="1"/><path d="M24.2 14.5 V17.5 H19 M13.5 17.5 H17.5 M15.5 15.2 L13.3 17.5 L15.5 19.8" fill="none" stroke="#000" stroke-width="1"/></svg>
<div class="a" style="left:723px;top:522px;width:36px;height:36px;background:#000;"></div>
<div class="a" style="left:724px;top:523px;width:34px;height:34px;background:#5ccbb0;"></div>
<div class="a" style="left:725px;top:524px;width:32px;height:32px;background:#9bd9d9;border-style:solid;border-width:2px;border-color:#d8fff8 #3f8080 #3f8080 #d8fff8;"></div>
<div class="a" style="left:731px;top:529px;width:21px;height:21px;background:transparent;border:1px solid #000;"></div>
<svg class="a" style="left:723px;top:522px" width="36" height="35"><path d="M13 16 V26 H24.5 V16" fill="none" stroke="#000" stroke-width="2"/><rect x="11.5" y="14.5" width="14.5" height="13" fill="none" stroke="#000" stroke-width="1"/><path d="M18.5 9 L13.5 13.5 H16 V20 H21 V13.5 H23.5 Z" fill="#000"/></svg>
<div class="a" style="left:723px;top:557px;width:36px;height:36px;background:#000;"></div>
<div class="a" style="left:724px;top:558px;width:34px;height:34px;background:#5ccbb0;"></div>
<div class="a" style="left:725px;top:559px;width:32px;height:32px;background:#9bd9d9;border-style:solid;border-width:2px;border-color:#d8fff8 #3f8080 #3f8080 #d8fff8;"></div>
<div class="a" style="left:731px;top:564px;width:21px;height:21px;background:transparent;border:1px solid #000;"></div>
<svg class="a" style="left:723px;top:557px" width="36" height="35"><rect x="12.5" y="10.5" width="12" height="10" fill="none" stroke="#000" stroke-width="2"/><rect x="11" y="9" width="15" height="13" fill="none" stroke="#000" stroke-width="1"/><path d="M18.5 27 L13.5 22.5 H16 V16 H21 V22.5 H23.5 Z" fill="#000"/></svg>
<div class="a" style="left:723px;top:592px;width:36px;height:36px;background:#000;"></div>
<div class="a" style="left:724px;top:593px;width:34px;height:34px;background:#5ccbb0;"></div>
<div class="a" style="left:725px;top:594px;width:32px;height:32px;background:#9bd9d9;border-style:solid;border-width:2px;border-color:#d8fff8 #3f8080 #3f8080 #d8fff8;"></div>
<div class="a" style="left:731px;top:599px;width:21px;height:21px;background:transparent;border:1px solid #000;"></div>
<svg class="a" style="left:723px;top:592px" width="36" height="35"><path d="M17 11.5 H25 V24.5 H17" fill="none" stroke="#000" stroke-width="2"/><rect x="15" y="10" width="11.5" height="16" fill="none" stroke="#000" stroke-width="1"/><path d="M10 18 L14.5 13 V15.5 H21 V20.5 H14.5 V23 Z" fill="#000"/></svg>
<div class="a" style="left:723px;top:627px;width:36px;height:36px;background:#000;"></div>
<div class="a" style="left:724px;top:628px;width:34px;height:34px;background:#5ccbb0;"></div>
<div class="a" style="left:725px;top:629px;width:32px;height:32px;background:#9bd9d9;border-style:solid;border-width:2px;border-color:#d8fff8 #3f8080 #3f8080 #d8fff8;"></div>
<div class="a" style="left:731px;top:634px;width:21px;height:21px;background:transparent;border:1px solid #000;"></div>
<svg class="a" style="left:723px;top:627px" width="36" height="35"><path d="M20 11.5 H12 V24.5 H20" fill="none" stroke="#000" stroke-width="2"/><rect x="10.5" y="10" width="11.5" height="16" fill="none" stroke="#000" stroke-width="1"/><path d="M27 18 L22.5 13 V15.5 H16 V20.5 H22.5 V23 Z" fill="#000"/></svg>
<div class="a" style="left:723px;top:662px;width:36px;height:36px;background:#000;"></div>
<div class="a" style="left:724px;top:663px;width:34px;height:34px;background:#5ccbb0;"></div>
<div class="a" style="left:725px;top:664px;width:32px;height:32px;background:#9bd9d9;border-style:solid;border-width:2px;border-color:#d8fff8 #3f8080 #3f8080 #d8fff8;"></div>
<div class="a" style="left:731px;top:669px;width:21px;height:21px;background:transparent;border:1px solid #000;"></div>
<svg class="a" style="left:723px;top:662px" width="36" height="35"><rect x="16.3" y="15.2" width="4.4" height="4.6" fill="none" stroke="#000" stroke-width="2"/><path d="M13.5 9 H23.5 L18.5 13 Z M13.5 26.2 H23.5 L18.5 22 Z M9.5 12.5 V22.5 L14 17.5 Z M27.5 12.5 V22.5 L23 17.5 Z" fill="#000"/><path d="M11.5 8.5 H25.5 M11.5 26.5 H25.5 M9 10.5 V24.5 M28 10.5 V24.5" stroke="#000" stroke-width="1"/></svg>
<div class="a" style="left:723px;top:697px;width:36px;height:36px;background:#000;"></div>
<div class="a" style="left:724px;top:698px;width:34px;height:34px;background:#5ccbb0;"></div>
<div class="a" style="left:725px;top:699px;width:32px;height:32px;background:#9bd9d9;border-style:solid;border-width:2px;border-color:#d8fff8 #3f8080 #3f8080 #d8fff8;"></div>
<div class="a" style="left:731px;top:704px;width:21px;height:21px;background:transparent;border:1px solid #000;"></div>
<svg class="a" style="left:723px;top:697px" width="36" height="35"><rect x="15.8" y="14.8" width="5.4" height="5.4" fill="none" stroke="#000" stroke-width="1.8"/><path d="M18.5 9 L14.5 13 H22.5 Z M18.5 26 L14.5 22 H22.5 Z M10 17.5 L14 13.5 V21.5 Z M27 17.5 L23 13.5 V21.5 Z" fill="#000"/></svg>
<div class="a" style="left:723px;top:487px;width:1px;height:245px;background:#000;"></div>
<div class="a" style="left:758px;top:487px;width:1px;height:243px;background:#000;"></div>
<div class="a" style="left:355px;top:733px;width:405px;height:1px;background:#000;"></div>
<div class="a" style="left:356px;top:734px;width:403px;height:27px;background:#5ccbb0;"></div>
<div class="a" style="left:357px;top:737px;width:401px;height:21px;background:#9bd9d9;border-style:solid;border-width:2px;border-color:#e0ffff #3f7070 #3f7070 #e0ffff;"></div>
<div class="a mono" style="left:357px;top:740px;width:401px;text-align:center;font-size:14px;letter-spacing:0.5px;line-height:16px">Close</div>
</body></html>
